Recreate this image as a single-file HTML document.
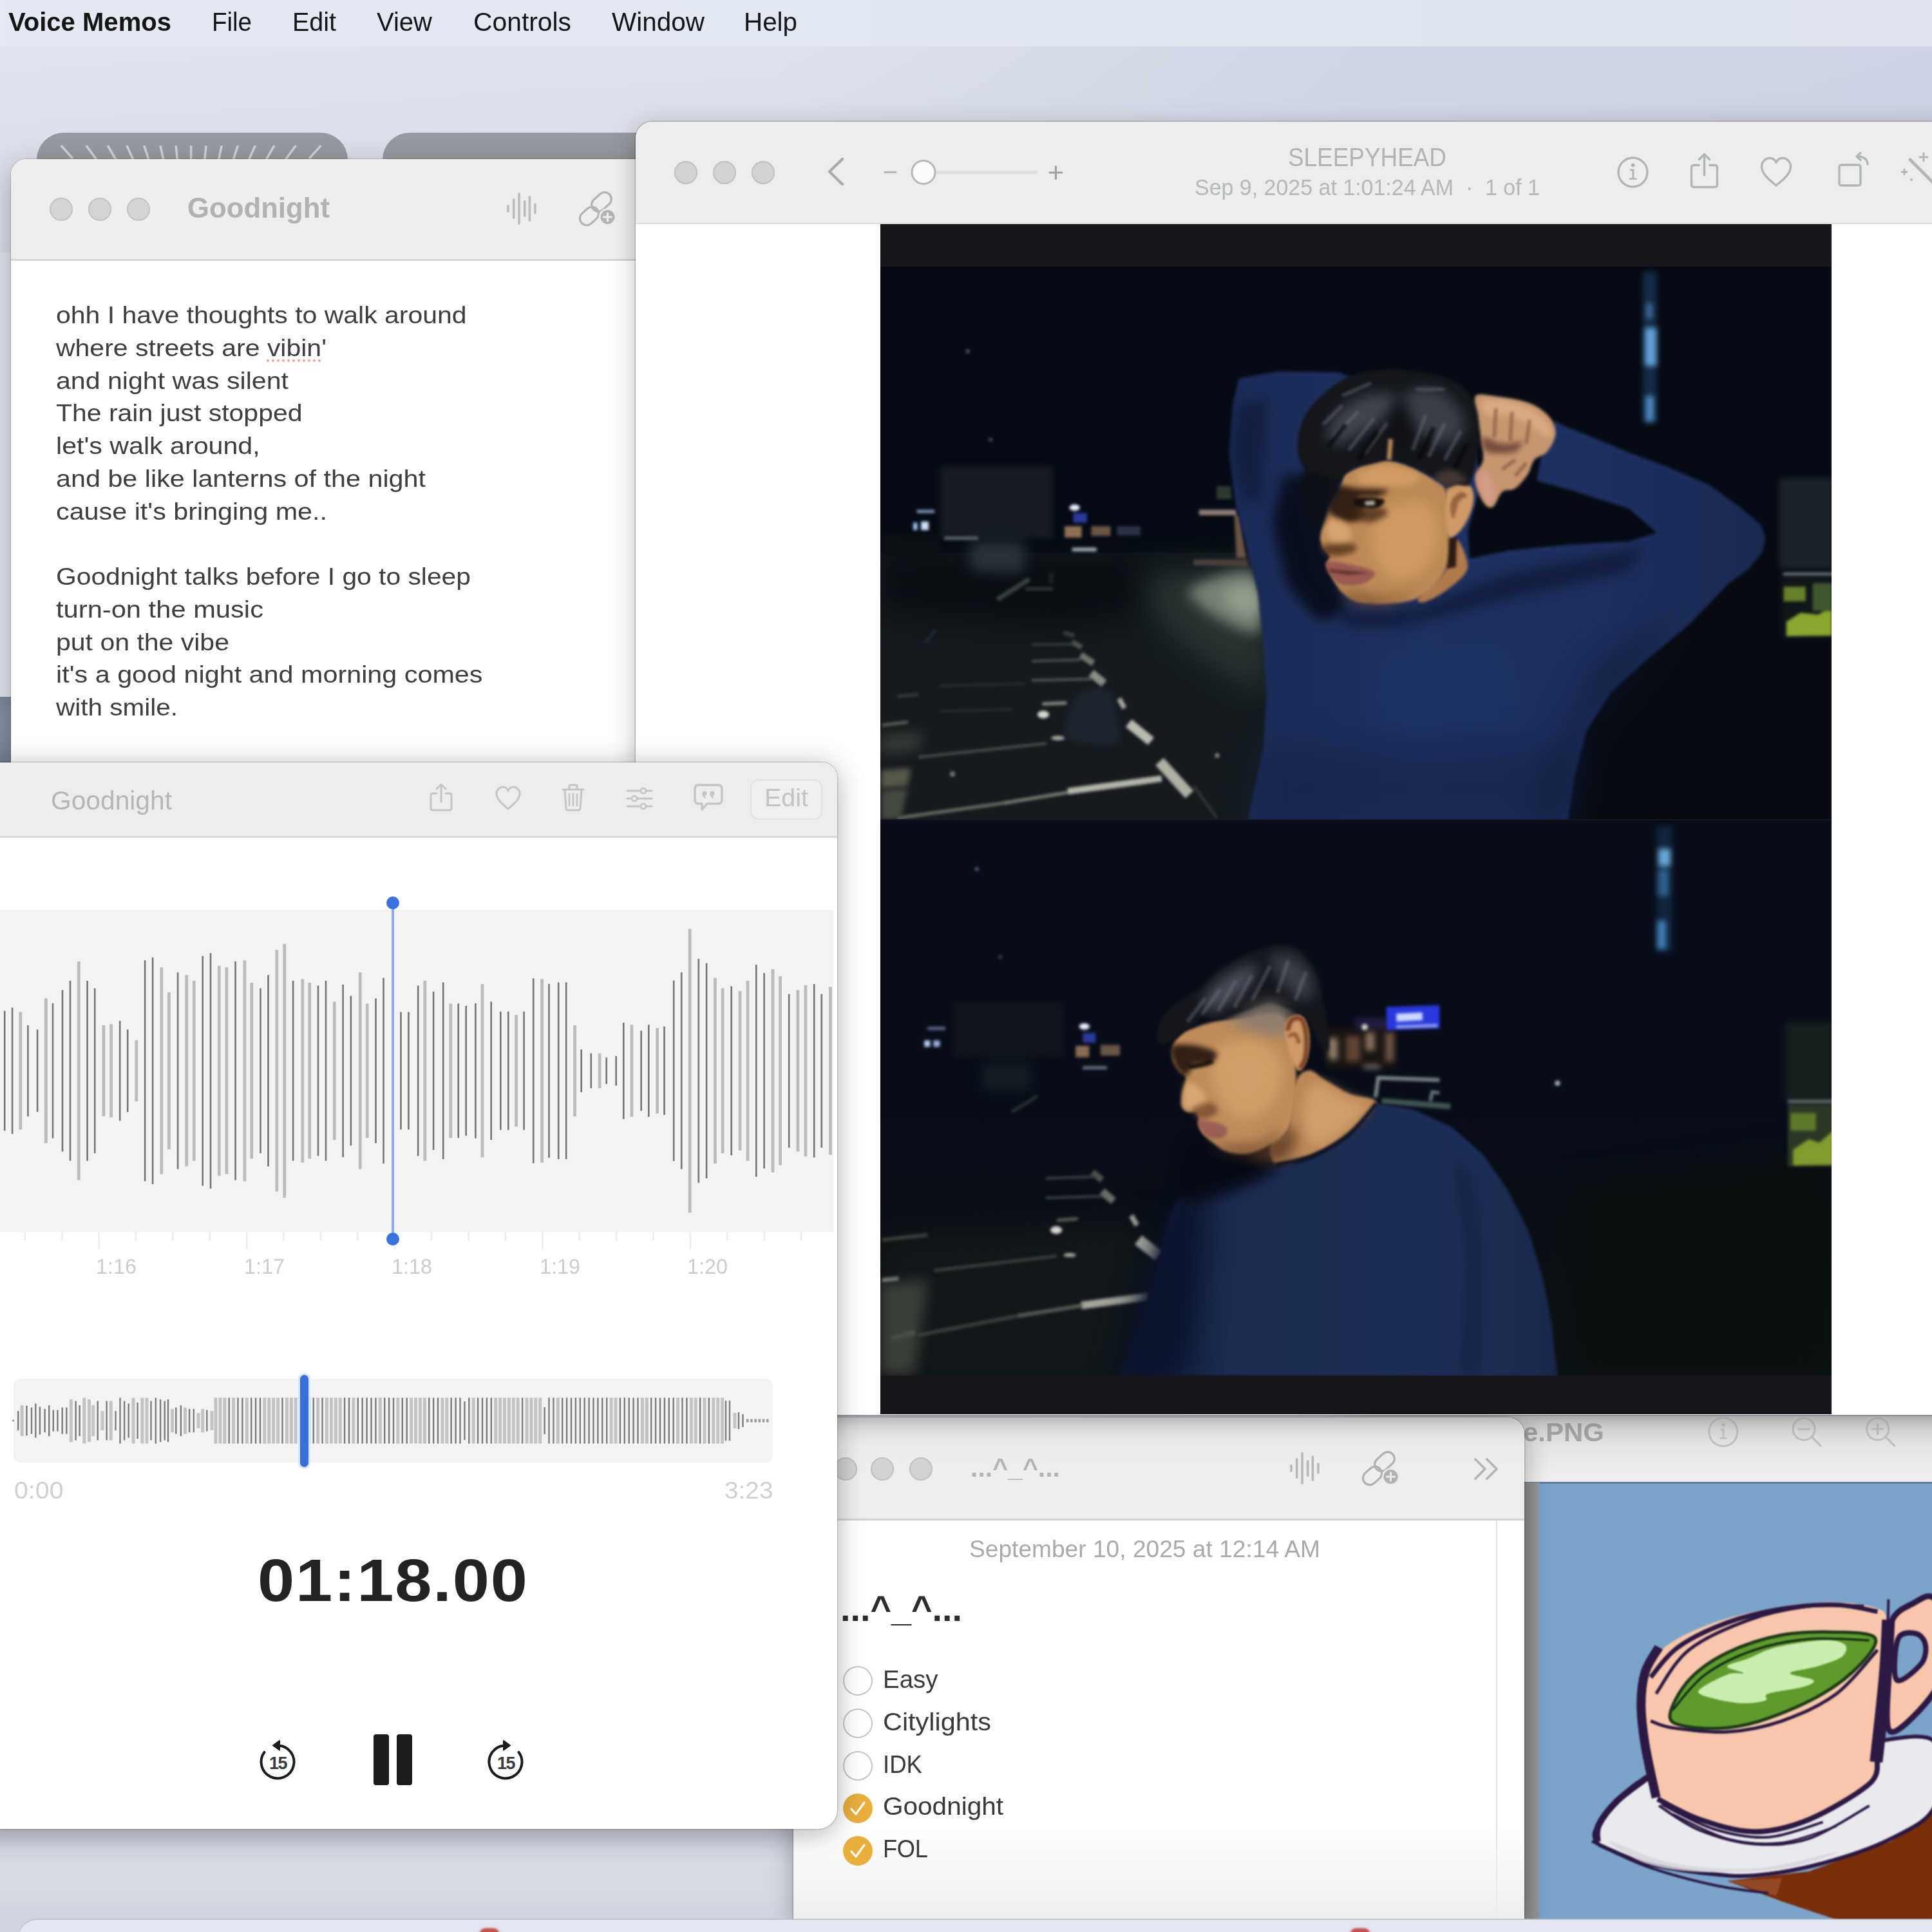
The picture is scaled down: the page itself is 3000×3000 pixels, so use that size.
<!DOCTYPE html><html><head><meta charset="utf-8"><title>Voice Memos</title><style>
html,body{margin:0;padding:0;}
body{width:3000px;height:3000px;overflow:hidden;position:relative;background:#dde2ec;font-family:"Liberation Sans",sans-serif;}
.a{position:absolute;}
.t{position:absolute;white-space:pre;}
svg{position:absolute;overflow:visible;}
</style></head><body>
<!-- sec_desktop -->
<div class="a" style="left:0;top:0;width:3000px;height:3000px;background:linear-gradient(90deg,#dfe4ee 0%,#dde2ec 40%,#d2d7e6 70%,#cdd2e4 100%);"></div>
<div class="a" style="left:0;top:72px;width:3000px;height:320px;background:linear-gradient(180deg,rgba(255,255,255,0.0),rgba(200,205,222,0.35));"></div>
<div class="a" style="left:0;top:0;width:3000px;height:72px;background:linear-gradient(90deg,#e5e9f3,#e1e7f1 60%,#dee3ee);"></div>
<div class="t" style="left:13.0px;top:14.3px;font-size:41.0px;line-height:41.0px;letter-spacing:0.00px;color:#151515;font-weight:700;transform:scaleX(0.9768);transform-origin:0 0;">Voice Memos</div>
<div class="t" style="left:329.0px;top:14.3px;font-size:41.0px;line-height:41.0px;letter-spacing:0.00px;color:#151515;transform:scaleX(0.9384);transform-origin:0 0;">File</div>
<div class="t" style="left:454.0px;top:14.3px;font-size:41.0px;line-height:41.0px;letter-spacing:0.00px;color:#151515;transform:scaleX(0.9625);transform-origin:0 0;">Edit</div>
<div class="t" style="left:585.0px;top:14.3px;font-size:41.0px;line-height:41.0px;letter-spacing:0.00px;color:#151515;transform:scaleX(0.9758);transform-origin:0 0;">View</div>
<div class="t" style="left:735.0px;top:14.3px;font-size:41.0px;line-height:41.0px;letter-spacing:0.00px;color:#151515;transform:scaleX(0.9956);transform-origin:0 0;">Controls</div>
<div class="t" style="left:950.0px;top:14.3px;font-size:41.0px;line-height:41.0px;letter-spacing:0.00px;color:#151515;transform:scaleX(0.9875);transform-origin:0 0;">Window</div>
<div class="t" style="left:1155.0px;top:14.3px;font-size:41.0px;line-height:41.0px;letter-spacing:0.00px;color:#151515;transform:scaleX(0.9843);transform-origin:0 0;">Help</div>
<div class="a" style="left:0;top:1082px;width:40px;height:110px;background:linear-gradient(180deg,#7a879c,#8591a6 30%,#7f8ba0);"></div>
<div class="a" style="left:0;top:2800px;width:1260px;height:200px;background:linear-gradient(180deg,#c8cdd8 0px,#ccd1dc 50px,#d6dbe4 95px,#d6dbe4 140px,#cfd4de 178px,#d1d6e0 200px);"></div>
<div class="a" style="left:57px;top:206px;width:483px;height:200px;border-radius:42px;background:#979ba1;"></div>
<div class="a" style="left:594px;top:206px;width:483px;height:200px;border-radius:42px;background:#979ba1;"></div>
<svg style="left:0;top:0" width="600" height="260" viewBox="0 0 600 260"><g stroke="#ced1d6" stroke-width="3.6" stroke-linecap="butt"><line x1="94.9" y1="226.0" x2="113.0" y2="246.1"/><line x1="133.9" y1="226.0" x2="149.7" y2="247.8"/><line x1="167.3" y1="226.0" x2="180.8" y2="249.4"/><line x1="196.9" y1="226.0" x2="207.9" y2="250.7"/><line x1="223.8" y1="226.0" x2="232.2" y2="251.7"/><line x1="249.0" y1="226.0" x2="254.6" y2="252.4"/><line x1="273.1" y1="226.0" x2="275.9" y2="252.9"/><line x1="296.6" y1="226.0" x2="296.6" y2="253.0"/><line x1="320.1" y1="226.0" x2="317.3" y2="252.9"/><line x1="344.2" y1="226.0" x2="338.6" y2="252.4"/><line x1="369.4" y1="226.0" x2="361.0" y2="251.7"/><line x1="396.3" y1="226.0" x2="385.3" y2="250.7"/><line x1="425.9" y1="226.0" x2="412.4" y2="249.4"/><line x1="459.3" y1="226.0" x2="443.5" y2="247.8"/><line x1="498.3" y1="226.0" x2="480.2" y2="246.1"/></g></svg>
<!-- sec_notes1 -->
<div class="a" style="left:17px;top:247px;width:1100px;height:1000px;border-radius:24px 0 0 0;background:#fff;box-shadow:0 0 0 1px rgba(0,0,0,0.16),0 12px 45px rgba(0,0,0,0.28);overflow:hidden;"><div class="a" style="left:0;top:0;width:1100px;height:155px;background:#eeeeee;border-bottom:3px solid #d6d6d6;"></div></div>
<div class="a" style="left:77.3px;top:307.0px;width:36.0px;height:36.0px;border-radius:50%;background:#d4d4d4;box-shadow:inset 0 0 0 2px #c4c4c4;"></div>
<div class="a" style="left:137.0px;top:307.0px;width:36.0px;height:36.0px;border-radius:50%;background:#d4d4d4;box-shadow:inset 0 0 0 2px #c4c4c4;"></div>
<div class="a" style="left:196.6px;top:307.0px;width:36.0px;height:36.0px;border-radius:50%;background:#d4d4d4;box-shadow:inset 0 0 0 2px #c4c4c4;"></div>
<div class="t" style="left:291.0px;top:301.7px;font-size:43.5px;line-height:43.5px;letter-spacing:0.00px;color:#b2b2b2;font-weight:700;transform:scaleX(1.0053);transform-origin:0 0;">Goodnight</div>
<svg style="left:780.0px;top:294.0px" width="60" height="60" viewBox="-30 -30 60 60"><rect x="-22.8" y="-6.0" width="3.6" height="12.0" rx="1.8" fill="#bdbdbd"/><rect x="-14.1" y="-16.0" width="3.6" height="32.0" rx="1.8" fill="#bdbdbd"/><rect x="-5.7" y="-25.0" width="3.6" height="50.0" rx="1.8" fill="#bdbdbd"/><rect x="2.9" y="-13.0" width="3.6" height="26.0" rx="1.8" fill="#bdbdbd"/><rect x="10.6" y="-20.0" width="3.6" height="40.0" rx="1.8" fill="#bdbdbd"/><rect x="19.1" y="-8.5" width="3.6" height="17.0" rx="1.8" fill="#bdbdbd"/></svg>
<svg style="left:892.0px;top:290.0px" width="70" height="70" viewBox="-35 -35 70 70"><g fill="none" stroke="#b4b4b4" stroke-width="3.3"><rect x="-17" y="-10.5" width="34" height="21" rx="10.5" transform="translate(7,-11.5) rotate(-42)"/><rect x="-16" y="-10.5" width="32" height="21" rx="10.5" transform="translate(-12,10.5) rotate(-42)"/></g><circle cx="16.5" cy="12" r="13.5" fill="#eeeeee"/><circle cx="16.5" cy="12" r="11" fill="#b4b4b4"/><path d="M16.5,6 V18 M10.5,12 H22.5" stroke="#eeeeee" stroke-width="3" stroke-linecap="round"/></svg>
<div class="t" style="left:87.0px;top:471.0px;font-size:37.8px;line-height:37.8px;letter-spacing:0.00px;color:#3e3e3e;transform:scaleX(1.0836);transform-origin:0 0;">ohh I have thoughts to walk around</div>
<div class="t" style="left:87.0px;top:521.8px;font-size:37.8px;line-height:37.8px;letter-spacing:0.00px;color:#3e3e3e;transform:scaleX(1.0839);transform-origin:0 0;">where streets are vibin'</div>
<div class="t" style="left:87.0px;top:572.5px;font-size:37.8px;line-height:37.8px;letter-spacing:0.00px;color:#3e3e3e;transform:scaleX(1.0873);transform-origin:0 0;">and night was silent</div>
<div class="t" style="left:87.0px;top:623.3px;font-size:37.8px;line-height:37.8px;letter-spacing:0.00px;color:#3e3e3e;transform:scaleX(1.0835);transform-origin:0 0;">The rain just stopped</div>
<div class="t" style="left:87.0px;top:674.0px;font-size:37.8px;line-height:37.8px;letter-spacing:0.00px;color:#3e3e3e;transform:scaleX(1.0888);transform-origin:0 0;">let's walk around,</div>
<div class="t" style="left:87.0px;top:724.8px;font-size:37.8px;line-height:37.8px;letter-spacing:0.00px;color:#3e3e3e;transform:scaleX(1.0926);transform-origin:0 0;">and be like lanterns of the night</div>
<div class="t" style="left:87.0px;top:775.5px;font-size:37.8px;line-height:37.8px;letter-spacing:0.00px;color:#3e3e3e;transform:scaleX(1.0923);transform-origin:0 0;">cause it's bringing me..</div>
<div class="t" style="left:87.0px;top:877.0px;font-size:37.8px;line-height:37.8px;letter-spacing:0.00px;color:#3e3e3e;transform:scaleX(1.0791);transform-origin:0 0;">Goodnight talks before I go to sleep</div>
<div class="t" style="left:87.0px;top:927.8px;font-size:37.8px;line-height:37.8px;letter-spacing:0.00px;color:#3e3e3e;transform:scaleX(1.1026);transform-origin:0 0;">turn-on the music</div>
<div class="t" style="left:87.0px;top:978.5px;font-size:37.8px;line-height:37.8px;letter-spacing:0.00px;color:#3e3e3e;transform:scaleX(1.0847);transform-origin:0 0;">put on the vibe</div>
<div class="t" style="left:87.0px;top:1029.3px;font-size:37.8px;line-height:37.8px;letter-spacing:0.00px;color:#3e3e3e;transform:scaleX(1.0931);transform-origin:0 0;">it's a good night and morning comes</div>
<div class="t" style="left:87.0px;top:1080.0px;font-size:37.8px;line-height:37.8px;letter-spacing:0.00px;color:#3e3e3e;transform:scaleX(1.0712);transform-origin:0 0;">with smile.</div>
<div class="a" style="left:414px;top:558px;width:84px;height:0;border-top:4px dotted #eaa3a3;"></div>
<!-- sec_png -->
<div class="a" style="left:2100px;top:2199px;width:1000px;height:782px;background:#7ba4ca;box-shadow:0 10px 40px rgba(0,0,0,0.3);"><div class="a" style="left:0;top:0;width:1000px;height:103px;background:linear-gradient(180deg,#cfcfd1 0px,#d9d9db 12px,#e4e4e6 45px,#ededef 85px,#f0f0f2 103px);"></div><div class="a" style="left:0;top:102px;width:1000px;height:3px;background:#5f7f9f;"></div><div class="a" style="left:267px;top:103px;width:24px;height:680px;background:linear-gradient(90deg,#8a8a8c,#949496 70%,#8b9aac);"></div></div>
<div class="t" style="left:2365.0px;top:2203.7px;font-size:40.5px;line-height:40.5px;letter-spacing:-0.00px;color:#a6a6a8;font-weight:700;transform:scaleX(1.0367);transform-origin:0 0;">e.PNG</div>
<svg style="left:2640px;top:2195px" width="360" height="70" viewBox="2640 2195 360 70"><g fill="none" stroke="#c2c2c4" stroke-width="3.2" stroke-linecap="round">
<circle cx="2675.8" cy="2223.5" r="22"/>
<circle cx="2801" cy="2219" r="17"/><path d="M2813,2231 L2827,2245 M2793,2219 H2809"/>
<circle cx="2915.7" cy="2219" r="17"/><path d="M2927.7,2231 L2941.7,2245 M2907.7,2219 H2923.7 M2915.7,2211 V2227"/>
</g><g fill="#c2c2c4"><circle cx="2676" cy="2212.5" r="2.8"/><path d="M2671.5,2218.5 H2677.5 V2232 H2681.5 V2234.5 H2670.5 V2232 H2674.5 V2221 H2671.5Z"/></g></svg>
<svg style="left:2391px;top:2303px" width="609" height="678" viewBox="2391 2303 609 678"><defs><clipPath id="cpc"><rect x="2391" y="2303" width="609" height="678"/></clipPath><filter id="cb" color-interpolation-filters="sRGB" filterUnits="userSpaceOnUse" x="2300" y="2250" width="800" height="800"><feGaussianBlur stdDeviation="1.3"/></filter></defs><g clip-path="url(#cpc)" filter="url(#cb)"><path d="M2682.0,2920.7 L2809.3,2905.8 L2936.7,2859.1 L3004.6,2812.4 L3004.6,2986.5 L2868.8,2986.5 L2766.9,2952.5Z" fill="#7a2d09"/><path d="M2682.0,2920.7 L2766.9,2916.4 L2758.4,2944.0Z" fill="#a35a3a" opacity="0.6"/><path d="M2480.4,2835.8 C2487.5,2823.7 2505.5,2800.0 2520.7,2787.0 C2535.9,2773.9 2537.7,2766.4 2571.6,2757.2 C2605.6,2748.1 2670.7,2740.3 2724.4,2731.8 C2778.2,2723.3 2847.5,2710.9 2894.2,2706.3 C2940.9,2701.7 2986.2,2687.9 3004.6,2704.2 C3023.0,2720.5 3015.9,2778.8 3004.6,2803.9 C2993.3,2829.1 2965.7,2840.0 2936.7,2854.9 C2907.7,2869.7 2865.9,2883.5 2830.6,2893.1 C2795.2,2902.6 2756.3,2909.7 2724.4,2912.2 C2692.6,2914.6 2667.9,2911.1 2639.6,2907.9 C2611.3,2904.7 2578.0,2899.1 2554.7,2893.1 C2531.3,2887.1 2512.2,2877.5 2499.5,2871.9 C2486.8,2866.2 2481.5,2865.1 2478.3,2859.1 C2475.1,2853.1 2473.3,2847.8 2480.4,2835.8Z" fill="#e9e9ee" stroke="#2b1843" stroke-width="6"/><path d="M2558.9,2759.4 C2551.1,2765.4 2525.0,2783.1 2512.2,2795.4 C2499.5,2807.8 2487.8,2823.0 2482.5,2833.7 C2477.2,2844.3 2480.7,2854.9 2480.4,2859.1" fill="none" stroke="#2b1843" stroke-width="10"/><path d="M2471.9,2859.1 C2485.7,2865.5 2523.2,2886.0 2554.7,2897.3 C2586.1,2908.6 2628.9,2920.0 2660.8,2927.0 C2692.6,2934.1 2731.5,2937.6 2745.7,2939.8" fill="none" stroke="#2b1843" stroke-width="4"/><path d="M2499.5,2859.1 C2506.6,2859.1 2559.6,2886.0 2597.1,2893.1 C2634.6,2900.1 2682.0,2904.4 2724.4,2901.6 C2766.9,2898.7 2844.7,2876.1 2851.8,2876.1 C2858.9,2876.1 2802.3,2896.5 2766.9,2901.6 C2731.5,2906.7 2674.9,2908.1 2639.6,2906.7 C2604.2,2905.2 2578.0,2901.0 2554.7,2893.1 C2531.3,2885.1 2492.4,2859.1 2499.5,2859.1Z" fill="#d5d5dc" opacity="0.8"/><path d="M2575.9,2803.9 C2586.5,2810.3 2614.8,2832.2 2639.6,2842.1 C2664.3,2852.0 2696.2,2861.2 2724.4,2863.4 C2752.7,2865.5 2779.6,2864.8 2809.3,2854.9 C2839.0,2845.0 2887.2,2812.4 2902.7,2803.9" fill="none" stroke="#2b1843" stroke-width="4"/><path d="M2597.1,2816.7 C2611.3,2823.0 2653.7,2847.4 2682.0,2854.9 C2710.3,2862.3 2738.6,2864.4 2766.9,2861.2 C2795.2,2858.1 2837.6,2840.0 2851.8,2835.8" fill="none" stroke="#2b1843" stroke-width="3"/><path d="M2552.5,2608.7 C2556.1,2583.9 2565.6,2575.4 2580.1,2562.0 C2594.6,2548.6 2615.5,2538.0 2639.6,2528.0 C2663.6,2518.1 2692.6,2509.3 2724.4,2502.6 C2756.3,2495.9 2799.4,2488.8 2830.6,2487.7 C2861.7,2486.7 2894.6,2490.9 2911.2,2496.2 C2927.8,2501.5 2927.5,2501.5 2930.3,2519.6 C2933.1,2537.6 2930.7,2572.6 2928.2,2604.4 C2925.7,2636.3 2919.7,2683.0 2915.4,2710.6 C2911.2,2738.1 2916.9,2753.0 2902.7,2770.0 C2888.6,2787.0 2856.7,2800.4 2830.6,2812.4 C2804.4,2824.5 2770.4,2838.6 2745.7,2842.1 C2720.9,2845.7 2710.3,2842.1 2682.0,2833.7 C2653.7,2825.2 2596.4,2811.7 2575.9,2791.2 C2555.4,2770.7 2562.8,2741.0 2558.9,2710.6 C2555.0,2680.1 2549.0,2633.5 2552.5,2608.7Z" fill="#f8c6ab"/><path d="M2936.7,2519.6 C2943.0,2500.5 2959.3,2495.9 2970.6,2489.8 C2981.9,2483.8 2996.1,2471.5 3004.6,2483.5 C3013.1,2495.5 3021.6,2538.3 3021.6,2562.0 C3021.6,2585.7 3018.7,2604.4 3004.6,2625.7 C2990.4,2646.9 2948.7,2692.9 2936.7,2689.3 C2924.6,2685.8 2932.4,2632.7 2932.4,2604.4 C2932.4,2576.2 2930.3,2538.7 2936.7,2519.6Z" fill="#f8c6ab" stroke="#2b1843" stroke-width="9"/><path d="M2947.3,2545.0 C2952.2,2533.0 2967.8,2535.1 2974.9,2536.5 C2981.9,2538.0 2988.3,2545.7 2989.7,2553.5 C2991.1,2561.3 2990.8,2574.0 2983.4,2583.2 C2975.9,2592.4 2951.2,2615.1 2945.2,2608.7 C2939.1,2602.3 2942.3,2557.1 2947.3,2545.0Z" fill="#7ba4ca" stroke="#2b1843" stroke-width="8"/><path d="M2592.9,2663.9 C2593.6,2651.8 2607.7,2625.0 2622.6,2608.7 C2637.4,2592.4 2658.0,2577.9 2682.0,2566.2 C2706.1,2554.6 2738.6,2544.0 2766.9,2538.7 C2795.2,2533.4 2827.7,2533.7 2851.8,2534.4 C2875.8,2535.1 2904.8,2534.8 2911.2,2542.9 C2917.6,2551.0 2903.4,2568.7 2890.0,2583.2 C2876.5,2597.7 2854.6,2615.8 2830.6,2629.9 C2806.5,2644.1 2770.4,2659.3 2745.7,2668.1 C2720.9,2677.0 2703.2,2680.8 2682.0,2683.0 C2660.8,2685.1 2633.2,2684.0 2618.3,2680.8 C2603.5,2677.7 2592.2,2675.9 2592.9,2663.9Z" fill="#5f9a2c" stroke="#1d3a1a" stroke-width="5"/><path d="M2597.1,2655.4 C2605.6,2646.2 2626.8,2615.8 2648.0,2600.2 C2669.3,2584.6 2697.6,2571.2 2724.4,2562.0 C2751.3,2552.8 2779.6,2547.5 2809.3,2545.0 C2839.0,2542.5 2887.2,2546.8 2902.7,2547.1" fill="none" stroke="#16301a" stroke-width="3.5"/><path d="M2637.4,2625.7 C2640.3,2619.3 2670.3,2604.8 2682.0,2600.2 C2693.7,2595.6 2707.5,2600.2 2707.5,2598.1 C2707.5,2596.0 2680.6,2591.4 2682.0,2587.5 C2683.4,2583.6 2703.2,2579.7 2716.0,2574.7 C2728.7,2569.8 2739.3,2562.4 2758.4,2557.8 C2777.5,2553.2 2812.9,2547.9 2830.6,2547.1 C2848.2,2546.4 2859.6,2549.3 2864.5,2553.5 C2869.5,2557.8 2867.3,2567.0 2860.3,2572.6 C2853.2,2578.3 2835.5,2583.2 2822.1,2587.5 C2808.6,2591.7 2780.7,2594.5 2779.6,2598.1 C2778.6,2601.6 2812.2,2605.2 2815.7,2608.7 C2819.2,2612.2 2812.5,2615.8 2800.8,2619.3 C2789.2,2622.8 2755.6,2626.4 2745.7,2629.9 C2735.8,2633.5 2747.8,2638.1 2741.4,2640.5 C2735.1,2643.0 2720.2,2645.1 2707.5,2644.8 C2694.7,2644.4 2676.7,2641.6 2665.0,2638.4 C2653.4,2635.2 2634.6,2632.0 2637.4,2625.7Z" fill="#c9eeb0"/><path d="M2575.9,2557.8 C2572.4,2564.1 2559.3,2581.1 2554.7,2596.0 C2550.1,2610.8 2548.3,2627.8 2548.3,2646.9 C2548.3,2666.0 2550.8,2686.5 2554.7,2710.6 C2558.6,2734.6 2568.8,2777.8 2571.6,2791.2" fill="none" stroke="#2b1843" stroke-width="14"/><path d="M2563.2,2604.4 C2570.2,2596.7 2585.8,2571.9 2605.6,2557.8 C2625.4,2543.6 2655.1,2529.5 2682.0,2519.6 C2708.9,2509.7 2738.6,2502.9 2766.9,2498.3 C2795.2,2493.7 2827.0,2491.3 2851.8,2492.0 C2876.5,2492.7 2904.8,2500.8 2915.4,2502.6" fill="none" stroke="#2b1843" stroke-width="7"/><path d="M2571.6,2629.9 C2580.1,2618.6 2598.5,2581.1 2622.6,2562.0 C2646.6,2542.9 2684.8,2526.6 2716.0,2515.3 C2747.1,2504.0 2779.6,2497.6 2809.3,2494.1 C2839.0,2490.6 2880.1,2494.1 2894.2,2494.1" fill="none" stroke="#2b1843" stroke-width="5"/><path d="M2563.2,2672.4 C2568.8,2674.1 2577.3,2680.1 2597.1,2683.0 C2616.9,2685.8 2653.7,2691.1 2682.0,2689.3 C2710.3,2687.6 2738.6,2682.3 2766.9,2672.4 C2795.2,2662.5 2827.0,2648.3 2851.8,2629.9 C2876.5,2611.5 2904.8,2573.3 2915.4,2562.0" fill="none" stroke="#2b1843" stroke-width="5"/><path d="M2932.4,2515.3 C2931.6,2530.2 2930.5,2567.7 2927.3,2604.4 C2924.2,2641.2 2915.7,2714.1 2913.3,2736.0" fill="none" stroke="#2b1843" stroke-width="20"/><path d="M2932.4,2483.5 L2931.6,2519.6" fill="none" stroke="#2b1843" stroke-width="4"/><path d="M2573.8,2793.3 C2584.7,2798.6 2614.4,2816.7 2639.6,2825.2 C2664.7,2833.7 2696.2,2844.3 2724.4,2844.3 C2752.7,2844.3 2779.6,2837.5 2809.3,2825.2 C2839.0,2812.8 2885.0,2785.5 2902.7,2770.0 C2920.4,2754.4 2913.3,2738.1 2915.4,2731.8" fill="none" stroke="#2b1843" stroke-width="8"/><path d="M2580.1,2801.8 C2593.6,2808.2 2633.2,2831.5 2660.8,2840.0 C2688.4,2848.5 2717.4,2854.5 2745.7,2852.8 C2774.0,2851.0 2816.4,2833.3 2830.6,2829.4" fill="none" stroke="#2b1843" stroke-width="4"/></g></svg>
<!-- sec_notes2 -->
<div class="a" style="left:1232px;top:2201px;width:1135px;height:780px;border-radius:0 26px 0 0;background:#fff;box-shadow:0 0 0 1.5px rgba(0,0,0,0.14),0 10px 40px rgba(0,0,0,0.3);overflow:hidden;"><div class="a" style="left:0;top:0;width:1135px;height:157px;background:linear-gradient(180deg,#dcdcde 0px,#e6e6e8 14px,#ececee 45px,#eeeef0 90px);border-bottom:3px solid #d4d4d6;"></div><div class="a" style="left:1091px;top:160px;width:2px;height:620px;background:#e4e4e6;"></div><div class="a" style="left:0;top:640px;width:1135px;height:140px;background:linear-gradient(180deg,rgba(240,240,242,0),rgba(236,236,238,0.9));"></div></div>
<div class="a" style="left:1295.0px;top:2262.6px;width:36.0px;height:36.0px;border-radius:50%;background:#d2d2d4;box-shadow:inset 0 0 0 2px #c2c2c4;"></div>
<div class="a" style="left:1352.0px;top:2262.6px;width:36.0px;height:36.0px;border-radius:50%;background:#d2d2d4;box-shadow:inset 0 0 0 2px #c2c2c4;"></div>
<div class="a" style="left:1412.0px;top:2262.6px;width:36.0px;height:36.0px;border-radius:50%;background:#d2d2d4;box-shadow:inset 0 0 0 2px #c2c2c4;"></div>
<div class="t" style="left:1507.0px;top:2259.1px;font-size:40.0px;line-height:40.0px;letter-spacing:0.00px;color:#b4b4b6;font-weight:700;transform:scaleX(1.0248);transform-origin:0 0;">...^_^...</div>
<svg style="left:1995.6px;top:2250.0px" width="60" height="60" viewBox="-30 -30 60 60"><rect x="-22.8" y="-6.0" width="3.6" height="12.0" rx="1.8" fill="#b9b9bb"/><rect x="-14.1" y="-16.0" width="3.6" height="32.0" rx="1.8" fill="#b9b9bb"/><rect x="-5.7" y="-25.0" width="3.6" height="50.0" rx="1.8" fill="#b9b9bb"/><rect x="2.9" y="-13.0" width="3.6" height="26.0" rx="1.8" fill="#b9b9bb"/><rect x="10.6" y="-20.0" width="3.6" height="40.0" rx="1.8" fill="#b9b9bb"/><rect x="19.1" y="-8.5" width="3.6" height="17.0" rx="1.8" fill="#b9b9bb"/></svg>
<svg style="left:2108.0px;top:2246.0px" width="70" height="70" viewBox="-35 -35 70 70"><g fill="none" stroke="#b2b2b4" stroke-width="3.3"><rect x="-17" y="-10.5" width="34" height="21" rx="10.5" transform="translate(7,-11.5) rotate(-42)"/><rect x="-16" y="-10.5" width="32" height="21" rx="10.5" transform="translate(-12,10.5) rotate(-42)"/></g><circle cx="16.5" cy="12" r="13.5" fill="#eaeaec"/><circle cx="16.5" cy="12" r="11" fill="#b2b2b4"/><path d="M16.5,6 V18 M10.5,12 H22.5" stroke="#eaeaec" stroke-width="3" stroke-linecap="round"/></svg>
<svg style="left:2285px;top:2255px" width="50" height="50" viewBox="2285 2255 50 50"><g fill="none" stroke="#b6b6b8" stroke-width="3.8" stroke-linecap="round" stroke-linejoin="round"><path d="M2291,2266 L2306,2281 L2291,2296"/><path d="M2309,2266 L2324,2281 L2309,2296"/></g></svg>
<div class="t" style="left:1505.0px;top:2386.7px;font-size:37.0px;line-height:37.0px;letter-spacing:0.00px;color:#aaaaac;transform:scaleX(1.0036);transform-origin:0 0;">September 10, 2025 at 12:14 AM</div>
<div class="t" style="left:1305.0px;top:2469.6px;font-size:56.0px;line-height:56.0px;letter-spacing:0.00px;color:#2c2c2e;font-weight:700;transform:scaleX(0.9953);transform-origin:0 0;">...^_^...</div>
<div class="a" style="left:1308.8px;top:2587.4px;width:46px;height:46px;border-radius:50%;box-sizing:border-box;border:2.5px solid #c6c6c8;background:#fff;"></div>
<div class="t" style="left:1371.0px;top:2588.0px;font-size:39.5px;line-height:39.5px;letter-spacing:0.00px;color:#3a3a3c;transform:scaleX(0.9736);transform-origin:0 0;">Easy</div>
<div class="a" style="left:1308.8px;top:2653.0px;width:46px;height:46px;border-radius:50%;box-sizing:border-box;border:2.5px solid #c6c6c8;background:#fff;"></div>
<div class="t" style="left:1371.0px;top:2653.6px;font-size:39.5px;line-height:39.5px;letter-spacing:0.00px;color:#3a3a3c;transform:scaleX(1.0484);transform-origin:0 0;">Citylights</div>
<div class="a" style="left:1308.8px;top:2719.0px;width:46px;height:46px;border-radius:50%;box-sizing:border-box;border:2.5px solid #c6c6c8;background:#fff;"></div>
<div class="t" style="left:1371.0px;top:2719.6px;font-size:39.5px;line-height:39.5px;letter-spacing:0.00px;color:#3a3a3c;transform:scaleX(0.9264);transform-origin:0 0;">IDK</div>
<div class="a" style="left:1308.8px;top:2784.5px;width:46px;height:46px;border-radius:50%;background:#e9ae3c;"></div>
<svg style="left:1308.8px;top:2784.5px" width="46" height="46" viewBox="-23 -23 46 46"><path d="M-10,1 L-3,9 L10,-9" fill="none" stroke="#fff" stroke-width="3.2" stroke-linecap="round" stroke-linejoin="round"/></svg>
<div class="t" style="left:1371.0px;top:2785.1px;font-size:39.5px;line-height:39.5px;letter-spacing:0.00px;color:#3a3a3c;transform:scaleX(1.0259);transform-origin:0 0;">Goodnight</div>
<div class="a" style="left:1308.8px;top:2850.8px;width:46px;height:46px;border-radius:50%;background:#e9ae3c;"></div>
<svg style="left:1308.8px;top:2850.8px" width="46" height="46" viewBox="-23 -23 46 46"><path d="M-10,1 L-3,9 L10,-9" fill="none" stroke="#fff" stroke-width="3.2" stroke-linecap="round" stroke-linejoin="round"/></svg>
<div class="t" style="left:1371.0px;top:2851.4px;font-size:39.5px;line-height:39.5px;letter-spacing:-0.37px;color:#3a3a3c;transform:scaleX(0.9200);transform-origin:0 0;">FOL</div>
<!-- sec_preview -->
<div class="a" style="left:987px;top:189px;width:2100px;height:2008px;border-radius:26px 0 0 0;background:#fff;box-shadow:0 0 0 1.5px rgba(0,0,0,0.16),0 8px 38px rgba(0,0,0,0.26);overflow:hidden;"><div class="a" style="left:0;top:0;width:2100px;height:157px;background:#ebedee;border-bottom:2px solid #dcdedf;"></div></div>
<div class="a" style="left:1047.4px;top:250.0px;width:36.0px;height:36.0px;border-radius:50%;background:#d0d2d3;box-shadow:inset 0 0 0 2px #c0c2c3;"></div>
<div class="a" style="left:1107.4px;top:250.0px;width:36.0px;height:36.0px;border-radius:50%;background:#d0d2d3;box-shadow:inset 0 0 0 2px #c0c2c3;"></div>
<div class="a" style="left:1167.0px;top:250.0px;width:36.0px;height:36.0px;border-radius:50%;background:#d0d2d3;box-shadow:inset 0 0 0 2px #c0c2c3;"></div>
<svg style="left:1270px;top:230px" width="400" height="80" viewBox="1270 230 400 80"><g fill="none" stroke-linecap="round" stroke-linejoin="round">
<path d="M1308,247 L1288,266.5 L1308,286" stroke="#a9abac" stroke-width="4.5"/>
<path d="M1374,267.5 H1391" stroke="#b4b6b7" stroke-width="3"/>
<path d="M1434,267.5 H1609" stroke="#dcdedf" stroke-width="5"/>
<circle cx="1434" cy="267.5" r="18" fill="#fbfbfb" stroke="#b6b8b9" stroke-width="3"/>
<path d="M1630,268 H1649 M1639.5,258.5 V277.5" stroke="#9fa1a2" stroke-width="3.2"/>
</g></svg>
<div class="t" style="left:2000.0px;top:224.1px;font-size:40.0px;line-height:40.0px;letter-spacing:0.00px;color:#b1b3b4;transform:scaleX(0.9221);transform-origin:0 0;">SLEEPYHEAD</div>
<div class="t" style="left:1855.0px;top:273.8px;font-size:34.5px;line-height:34.5px;letter-spacing:0.00px;color:#b6b8b9;transform:scaleX(0.9840);transform-origin:0 0;">Sep 9, 2025 at 1:01:24 AM  ·  1 of 1</div>
<svg style="left:2500px;top:225px" width="500" height="90" viewBox="2500 225 500 90"><g fill="none" stroke="#b3b5b6" stroke-width="3.4" stroke-linecap="round" stroke-linejoin="round">
<circle cx="2535.5" cy="267.5" r="22.5"/>

<path d="M2638,256.5 H2630.5 Q2626.5,256.5 2626.5,260.5 V286.5 Q2626.5,290.5 2630.5,290.5 H2662.5 Q2666.5,290.5 2666.5,286.5 V260.5 Q2666.5,256.5 2662.5,256.5 H2655"/>
<path d="M2646.5,272 V240 M2638.5,247.5 L2646.5,239.5 L2654.5,247.5"/>
<path d="M2758,288 C2744,277 2735.5,268.5 2735.5,258.5 C2735.5,251 2741.5,245.5 2748,245.5 C2753,245.5 2756.5,248.5 2758,252.5 C2759.5,248.5 2763,245.5 2768,245.5 C2774.500,245.5 2780.500,251 2780.500,258.5 C2780.500,268.500 2772,277 2758,288Z"/>
<rect x="2856" y="256" width="33" height="32" rx="3"/>
<path d="M2884,243 Q2899,243 2900,255"/>
<path d="M2889,237.5 L2883,243 L2889,248.5"/>
<path d="M2966,248 L3005,287" stroke-width="5"/>
<path d="M2987,238 V250 M2981,244 H2993 M2957,263 V271 M2953,267 H2961" stroke-width="2.8"/>
</g><g fill="#b3b5b6"><circle cx="2535.7" cy="256.5" r="2.9"/><path d="M2531,262.5 H2537.5 V276.500 H2541.500 V279 H2530 V276.500 H2534.300 V265 H2531Z"/><circle cx="2968" cy="279" r="2"/></g>
</svg>
<svg class="a" style="left:1367px;top:348px;" width="1477" height="1848" viewBox="1367 348 1477 1848">
<defs>
<filter id="b2" color-interpolation-filters="sRGB" filterUnits="userSpaceOnUse" x="1200" y="200" width="1800" height="2100"><feGaussianBlur stdDeviation="2"/></filter>
<filter id="b4" color-interpolation-filters="sRGB" filterUnits="userSpaceOnUse" x="1200" y="200" width="1800" height="2100"><feGaussianBlur stdDeviation="4"/></filter>
<filter id="b10" color-interpolation-filters="sRGB" filterUnits="userSpaceOnUse" x="1200" y="200" width="1800" height="2100"><feGaussianBlur stdDeviation="10"/></filter>
<filter id="b25" color-interpolation-filters="sRGB" filterUnits="userSpaceOnUse" x="1200" y="200" width="1800" height="2100"><feGaussianBlur stdDeviation="25"/></filter>
<clipPath id="cp1"><rect x="1367" y="414" width="1477" height="858"/></clipPath>
<clipPath id="cp2"><rect x="1367" y="1274" width="1477" height="862"/></clipPath>
<linearGradient id="sw1" x1="0" y1="0" x2="1" y2="0"><stop offset="0" stop-color="#1a2a55"/><stop offset="0.35" stop-color="#1f3263"/><stop offset="0.7" stop-color="#1e3060"/><stop offset="1" stop-color="#192850"/></linearGradient>
<linearGradient id="sw2" x1="0" y1="0" x2="1" y2="0"><stop offset="0" stop-color="#101a36"/><stop offset="0.25" stop-color="#1a2a50"/><stop offset="0.8" stop-color="#1c2d56"/><stop offset="1" stop-color="#182649"/></linearGradient>
<linearGradient id="face1" x1="0" y1="0" x2="1" y2="0"><stop offset="0" stop-color="#6b3f25"/><stop offset="0.3" stop-color="#b57d4e"/><stop offset="0.6" stop-color="#d39b68"/><stop offset="1" stop-color="#a8703f"/></linearGradient>
<linearGradient id="face2" x1="0" y1="0" x2="1" y2="0"><stop offset="0" stop-color="#b88355"/><stop offset="0.4" stop-color="#cf9a6a"/><stop offset="1" stop-color="#b07a4c"/></linearGradient>
<radialGradient id="road1" cx="0.9" cy="0.35" r="0.8"><stop offset="0" stop-color="#8b978a"/><stop offset="0.35" stop-color="#4a554e"/><stop offset="0.8" stop-color="#151c1d" stop-opacity="0"/></radialGradient>
</defs>
<rect x="1367" y="348" width="1477" height="1848" fill="#16171c"/>
<g clip-path="url(#cp1)">
<rect x="1367" y="414" width="1477" height="858" fill="#060b15"/>
<rect x="1367" y="858" width="1477" height="420" fill="#080c12"/>
<rect x="1367" y="858" width="640" height="420" fill="#141a1e"/>
<path d="M1360.0,856.2 L1923.1,856.2 L1923.1,919.1 L1658.1,978.7 L1360.0,952.2Z" fill="#0a0f14" filter="url(#b25)"/>
<path d="M1774.0,889.3 L1952.9,879.4 L1966.2,1078.1 L1856.9,1011.9 L1790.6,952.2Z" fill="#2f3a36" opacity="0.85" filter="url(#b25)"/>
<path d="M1850.2,912.5 C1864.0,904.2 1928.6,878.3 1946.3,889.3 C1964.0,900.3 1963.4,966.0 1956.2,978.7 C1949.0,991.4 1918.7,972.1 1903.2,965.5 C1887.8,958.9 1872.3,947.8 1863.5,939.0 C1854.6,930.2 1836.4,920.8 1850.2,912.5Z" fill="#7f8b7c" opacity="0.9" filter="url(#b10)"/>
<path d="M1903.2,919.1 C1908.7,913.6 1941.3,907.0 1949.6,912.5 C1957.9,918.0 1958.4,946.7 1952.9,952.2 C1947.4,957.8 1924.8,951.1 1916.5,945.6 C1908.2,940.1 1897.7,924.6 1903.2,919.1Z" fill="#a9b5a0" opacity="0.6" filter="url(#b10)"/>
<path d="M1459.4,723.7 L1634.9,723.7 L1634.9,836.3 L1459.4,836.3Z" fill="#151b20" filter="url(#b4)"/>
<path d="M1505.7,841.3 L1591.9,841.3 L1588.6,889.3 L1509.1,886.0Z" fill="#2c373d" filter="url(#b10)" opacity="0.9"/>
<path d="M1368.3,829.7 L1459.4,829.7 L1459.4,862.8 L1368.3,862.8Z" fill="#0c1116" filter="url(#b4)"/>
<g filter="url(#b2)">
<path d="M1418.0,811.5 L1424.6,811.5 L1424.6,823.1 L1418.0,823.1Z" fill="#9fc0f0"/>
<path d="M1430.2,809.8 L1442.1,809.8 L1442.1,823.1 L1430.2,823.1Z" fill="#cfe0ff"/>
<path d="M1423.6,791.6 L1451.1,791.6 L1451.1,796.6 L1423.6,796.6Z" fill="#7f93b8"/>
<ellipse cx="1668.7" cy="788.3" rx="8" ry="5" fill="#e8f0ff"/>
<path d="M1666.4,796.6 L1687.9,796.6 L1687.9,811.5 L1666.4,811.5Z" fill="#2a3a9a"/>
<path d="M1653.1,817.1 L1679.6,817.1 L1679.6,834.7 L1653.1,834.7Z" fill="#8f7052"/>
<path d="M1694.5,817.1 L1724.4,817.1 L1724.4,832.3 L1694.5,832.3Z" fill="#6a5645"/>
<path d="M1734.3,817.1 L1770.7,817.1 L1770.7,831.3 L1734.3,831.3Z" fill="#2c3044"/>
<path d="M1664.7,850.2 L1702.8,850.2 L1702.8,856.2 L1664.7,856.2Z" fill="#9aa6b4"/>
<path d="M1861.8,791.6 L1919.8,791.6 L1919.8,799.9 L1861.8,799.9Z" fill="#8f8078"/>
<path d="M1916.5,799.9 L1924.8,799.9 L1934.7,866.1 L1919.8,866.1Z" fill="#6a5446"/>
<path d="M1853.5,868.8 L1936.3,868.8 L1938.0,879.4 L1853.5,878.0Z" fill="#4a403a"/>
<path d="M1466.0,833.0 L1519.0,833.0 L1519.0,838.3 L1466.0,838.3Z" fill="#5a626c"/>
<circle cx="1502.6" cy="545.6" r="3" fill="#55607a"/>
<circle cx="1538" cy="682.8" r="3" fill="#454f66"/>
<path d="M1889,755 L1911,755 L1913,775 L1889,775Z" fill="#2c3a30"/>
</g>
<g filter="url(#b2)">
<path d="M1658.1,1228.8 L1803.9,1208.9" stroke="#b4b6aa" stroke-width="10.0" fill="none" stroke-linecap="butt" opacity="1.00"/>
<path d="M1800.5,1182.5 L1846.9,1233.8" stroke="#aeb0a4" stroke-width="17.0" fill="none" stroke-linecap="butt" opacity="1.00"/>
<path d="M1752.5,1122.8 L1787.3,1151.0" stroke="#babcb0" stroke-width="15.0" fill="none" stroke-linecap="butt" opacity="1.00"/>
<path d="M1737.6,1084.7 L1745.9,1099.6" stroke="#a4a69c" stroke-width="8.0" fill="none" stroke-linecap="butt" opacity="1.00"/>
<path d="M1694.5,1045.0 L1714.4,1061.6" stroke="#8a8e84" stroke-width="13.0" fill="none" stroke-linecap="butt" opacity="1.00"/>
<path d="M1678.0,1016.8 L1697.9,1030.1" stroke="#6f746c" stroke-width="10.0" fill="none" stroke-linecap="butt" opacity="1.00"/>
<path d="M1664.7,997.0 L1679.6,1005.2" stroke="#50564f" stroke-width="8.0" fill="none" stroke-linecap="butt" opacity="1.00"/>
<path d="M1651.5,982.1 L1668.0,987.0" stroke="#3a403c" stroke-width="6.0" fill="none" stroke-linecap="butt" opacity="1.00"/>
<path d="M1601.8,1056.6 L1694.5,1054.3" stroke="#5a605a" stroke-width="3.5" fill="none" stroke-linecap="butt" opacity="1.00"/>
<path d="M1601.8,1026.8 L1678.0,1024.5" stroke="#525852" stroke-width="3.5" fill="none" stroke-linecap="butt" opacity="1.00"/>
<path d="M1601.8,1001.3 L1664.7,1000.3" stroke="#3f4540" stroke-width="3.0" fill="none" stroke-linecap="butt" opacity="1.00"/>
<path d="M1618.4,1093.0 L1656.5,1091.4" stroke="#8a8e86" stroke-width="5.0" fill="none" stroke-linecap="butt" opacity="1.00"/>
<path d="M1426.2,1175.8 L1625.0,1154.3" stroke="#4d534d" stroke-width="4.0" fill="none" stroke-linecap="butt" opacity="1.00"/>
<path d="M1369.9,1126.1 L1409.7,1121.2" stroke="#5a5f58" stroke-width="5.0" fill="none" stroke-linecap="butt" opacity="1.00"/>
<path d="M1393.1,1270.2 L1558.7,1247.0" stroke="#6a6f66" stroke-width="5.0" fill="none" stroke-linecap="butt" opacity="1.00"/>
<path d="M1558.7,1247.0 L1658.1,1230.5" stroke="#7a7f76" stroke-width="5.0" fill="none" stroke-linecap="butt" opacity="1.00"/>
<path d="M1853.5,1220.5 L1890.0,1270.2" stroke="#3a4040" stroke-width="3.0" fill="none" stroke-linecap="butt" opacity="1.00"/>
<path d="M1548.8,930.7 L1598.5,899.2" stroke="#3a4242" stroke-width="7.0" fill="none" stroke-linecap="butt" opacity="1.00"/>
<path d="M1591.9,914.2 L1634.9,914.2" stroke="#2c3436" stroke-width="5.0" fill="none" stroke-linecap="butt" opacity="1.00"/>
<path d="M1436.2,998.6 L1452.7,978.7" stroke="#242c30" stroke-width="4.0" fill="none" stroke-linecap="butt" opacity="1.00"/>
<path d="M1459.4,1064.9 L1591.9,1061.6" stroke="#2a3032" stroke-width="3.0" fill="none" stroke-linecap="butt" opacity="1.00"/>
<path d="M1459.4,1104.6 L1572.0,1101.3" stroke="#2a3032" stroke-width="3.0" fill="none" stroke-linecap="butt" opacity="1.00"/>
<path d="M1393.1,1081.4 L1426.2,1078.1" stroke="#3a403c" stroke-width="4.0" fill="none" stroke-linecap="butt" opacity="1.00"/>
<ellipse cx="1620" cy="1109.6" rx="9" ry="6" fill="#d8dad0"/>
<ellipse cx="1643" cy="1146" rx="11" ry="3.5" fill="#a8aaa0"/>
<circle cx="1479" cy="1202" r="4" fill="#7a7c74"/>
<circle cx="1890" cy="1173" r="3.5" fill="#8a8c84"/>
<path d="M1628.3,889.3 L1636.6,889.3 L1636.6,905.9 L1628.3,905.9Z" fill="#1a2024"/>
</g>
<path d="M1368.3,1195.7 L1414.7,1192.4 L1409.7,1220.5 L1368.3,1223.9Z" fill="#5a5c4c" filter="url(#b4)" opacity="0.95"/>
<path d="M1368.3,1227.2 L1409.7,1223.9 L1399.7,1270.2 L1368.3,1273.5Z" fill="#4a4e42" filter="url(#b4)" opacity="0.9"/>
<path d="M1368.3,1141.0 L1432.9,1137.7 L1426.2,1164.2 L1368.3,1170.9Z" fill="#3a4038" filter="url(#b10)" opacity="0.9"/>
<path d="M1659.8,1104.6 C1663.1,1092.5 1667.8,1080.3 1678.0,1074.8 C1688.2,1069.3 1711.7,1065.4 1721.0,1071.5 C1730.4,1077.6 1732.1,1097.4 1734.3,1111.2 C1736.5,1125.0 1747.0,1148.2 1734.3,1154.3 C1721.6,1160.4 1670.5,1156.0 1658.1,1147.7 C1645.7,1139.4 1656.5,1116.8 1659.8,1104.6Z" fill="#1d232c" filter="url(#b4)"/>
<g filter="url(#b4)">
<path d="M2551.1,421.7 L2572.8,421.7 L2572.8,655.4 L2551.1,655.4Z" fill="#142a44"/>
<path d="M2553.8,508.7 L2572.8,508.7 L2572.8,568.5 L2553.8,568.5Z" fill="#5f9fd4"/>
<path d="M2554.9,614.7 L2568.5,614.7 L2568.5,655.4 L2554.9,655.4Z" fill="#4a88bf"/>
<path d="M2555.4,470.7 L2566.3,470.7 L2566.3,495.1 L2555.4,495.1Z" fill="#3a6a9a"/>
</g>
<path d="M2763.0,742.4 L2847.3,742.4 L2847.3,883.7 L2763.0,883.7Z" fill="#1b2328" filter="url(#b4)"/>
<path d="M2765.8,889.1 L2847.3,889.1 L2847.3,989.7 L2765.8,989.7Z" fill="#10161a" filter="url(#b4)"/>
<g filter="url(#b2)">
<path d="M2769.6,910.9 L2803.8,910.9 L2803.8,933.7 L2769.6,933.7Z" fill="#66802a"/>
<path d="M2773.9,965.2 L2795.7,951.6 L2822.8,954.3 L2844.6,943.5 L2844.6,987.0 L2773.9,988.0Z" fill="#8aa62e"/>
<path d="M2814.7,905.4 L2844.6,905.4 L2844.6,948.9 L2814.7,948.9Z" fill="#3f5630"/>
<path d="M2768.5,889.1 L2847.3,889.1 L2847.3,893.5 L2768.5,893.5Z" fill="#66707a"/>
</g>
<path d="M1923.4,587.5 L1985.9,576.6 L2078.3,578.3 L2176.1,617.4 L2284.8,682.6 L2301.1,747.8 L2279.3,823.9 L2282.1,867.4 L2342.9,854.9 L2436.4,845.7 L2529.3,840.8 L2572.8,827.2 L2529.3,789.7 L2442.4,762.0 L2386.4,746.2 L2393.5,704.3 L2415.2,652.7 L2423.9,659.2 L2475.0,679.9 L2529.3,702.7 L2591.8,726.1 L2653.8,752.7 L2703.3,788.6 L2734.2,814.7 L2741.3,834.8 L2737.0,856.5 L2715.8,883.2 L2684.8,905.4 L2621.7,970.7 L2556.5,1025.0 L2502.2,1073.9 L2464.1,1133.7 L2445.1,1204.3 L2434.2,1275.0 L1937.0,1275.0 L1947.8,1226.1 L1961.4,1160.9 L1966.8,1079.3 L1961.4,997.8 L1953.3,921.7 L1937.0,856.5 L1917.9,780.4 L1908.7,704.3 L1914.1,628.3Z" fill="url(#sw1)" filter="url(#b2)"/>
<path d="M2002.2,747.8 L2034.8,889.1 L2078.3,943.5 L2056.5,965.2 L2013.0,921.7 L1980.4,813.0Z" fill="#0e1836" opacity="0.75" filter="url(#b10)"/>
<path d="M2083.7,948.9 L2197.8,943.5 L2339.1,889.1 L2447.8,867.4 L2556.5,845.7 L2529.3,889.1 L2339.1,932.6 L2176.1,976.1 L2089.1,976.1Z" fill="#0d1633" opacity="0.7" filter="url(#b10)"/>
<path d="M2475.0,1025.0 L2610.9,943.5 L2556.5,1025.0 L2464.1,1133.7 L2437.0,1269.6 L2366.3,1269.6Z" fill="#0c1530" opacity="0.6" filter="url(#b25)"/>
<path d="M2121.7,1025.0 L2339.1,997.8 L2366.3,1160.9 L2121.7,1188.0Z" fill="#223a78" opacity="0.22" filter="url(#b25)"/>
<path d="M1958.7,1150.0 L2447.8,1150.0 L2437.0,1296.7 L1937.0,1296.7Z" fill="#131f42" opacity="0.5" filter="url(#b25)"/>
<path d="M1920.7,628.3 L1969.6,617.4 L1958.7,780.4 L1931.5,780.4 L1912.5,704.3Z" fill="#0c1530" opacity="0.55" filter="url(#b10)"/>
<path d="M1994,735 L2050,740 L2072,860 L2092,950 L2046,962 L1998,905 L1978,810Z" fill="#090e1c" opacity="0.92" filter="url(#b10)"/>
<path d="M2203.6,927.6 C2209.0,919.7 2233.8,902.7 2243.4,887.8 C2252.9,872.9 2254.9,841.0 2260.7,838.1 C2266.5,835.2 2276.1,861.3 2278.1,870.4 C2280.2,879.5 2279.4,884.5 2273.2,892.8 C2267.0,901.1 2251.2,913.1 2240.9,920.1 C2230.5,927.2 2217.3,933.8 2211.1,935.0 C2204.8,936.3 2198.2,935.4 2203.6,927.6Z" fill="#b07a4c" filter="url(#b2)"/>
<path d="M2243.4,835.7 L2262.0,833.2 L2260.7,880.4 L2245.8,882.9Z" fill="#2a1a12" filter="url(#b2)"/>
<path d="M2086.8,738.8 C2083.9,743.3 2083.5,750.4 2079.4,758.6 C2075.2,766.9 2066.1,779.3 2062.0,788.4 C2057.8,797.6 2056.5,805.4 2054.5,813.3 C2052.5,821.2 2050.1,829.4 2050.1,835.7 C2050.1,841.9 2052.1,846.0 2054.5,850.6 C2056.9,855.1 2063.4,858.8 2064.5,863.0 C2065.5,867.1 2060.3,870.4 2060.7,875.4 C2061.2,880.4 2064.7,887.4 2067.0,892.8 C2069.2,898.2 2071.1,902.7 2074.4,907.7 C2077.7,912.7 2081.0,918.1 2086.8,922.6 C2092.6,927.2 2098.0,932.5 2109.2,935.0 C2120.4,937.5 2139.0,938.3 2153.9,937.5 C2168.8,936.7 2186.2,935.0 2198.6,930.1 C2211.1,925.1 2220.6,916.0 2228.4,907.7 C2236.3,899.4 2242.3,892.0 2245.8,880.4 C2249.4,868.8 2249.2,853.5 2249.6,838.1 C2250.0,822.8 2249.4,801.7 2248.3,788.4 C2247.3,775.2 2246.7,765.7 2243.4,758.6 C2240.0,751.6 2237.1,751.8 2228.4,746.2 C2219.8,740.6 2203.6,730.5 2191.2,725.1 C2178.8,719.7 2165.9,714.5 2153.9,713.9 C2141.9,713.3 2128.7,718.5 2119.1,721.4 C2109.6,724.3 2102.2,728.4 2096.8,731.3 C2091.4,734.2 2089.7,734.2 2086.8,738.8Z" fill="#bd8a56" filter="url(#b2)"/>
<path d="M2139.0,803.4 C2150.6,789.3 2187.9,776.9 2203.6,778.5 C2219.3,780.2 2230.9,797.1 2233.4,813.3 C2235.9,829.4 2229.3,860.9 2218.5,875.4 C2207.7,889.9 2182.9,902.3 2168.8,900.2 C2154.7,898.2 2139.0,879.1 2134.0,863.0 C2129.1,846.8 2127.4,817.4 2139.0,803.4Z" fill="#d49e66" opacity="0.8" filter="url(#b10)"/>
<path d="M2109.2,736.3 C2115.0,731.3 2138.2,721.0 2153.9,721.4 C2169.6,721.8 2198.6,733.4 2203.6,738.8 C2208.6,744.1 2197.8,751.6 2183.7,753.7 C2169.6,755.7 2131.6,754.1 2119.1,751.2 C2106.7,748.3 2103.4,741.2 2109.2,736.3Z" fill="#d9a46a" opacity="0.7" filter="url(#b4)"/>
<path d="M2079.4,756.1 C2087.2,751.2 2096.8,757.8 2109.2,758.6 C2121.6,759.5 2148.9,759.0 2153.9,761.1 C2158.9,763.2 2146.5,769.0 2139.0,771.1 C2131.6,773.1 2112.5,769.0 2109.2,773.5 C2105.9,778.1 2120.8,792.2 2119.1,798.4 C2117.5,804.6 2106.7,810.0 2099.3,810.8 C2091.8,811.6 2080.6,807.1 2074.4,803.4 C2068.2,799.6 2061.2,796.3 2062.0,788.4 C2062.8,780.6 2071.5,761.1 2079.4,756.1Z" fill="#2c1b12" opacity="0.95" filter="url(#b4)"/>
<path d="M2104.2,790.9 C2110.0,788.0 2135.7,787.2 2144.0,788.4 C2152.3,789.7 2156.4,794.7 2153.9,798.4 C2151.4,802.1 2136.5,809.6 2129.1,810.8 C2121.6,812.0 2113.3,809.2 2109.2,805.8 C2105.1,802.5 2098.4,793.8 2104.2,790.9Z" fill="#4a2c1a" opacity="0.8" filter="url(#b4)"/>
<path d="M2101.7,776.0 C2103.4,773.5 2111.3,772.3 2119.1,772.3 C2127.0,772.3 2145.6,773.3 2148.9,776.0 C2152.3,778.7 2145.6,786.6 2139.0,788.4 C2132.4,790.3 2115.4,789.3 2109.2,787.2 C2103.0,785.1 2100.1,778.5 2101.7,776.0Z" fill="#1a100b" filter="url(#b2)"/>
<path d="M2119.1,778.5 L2134.0,777.3 L2135.3,784.0 L2120.4,784.7Z" fill="#b8b4a8" filter="url(#b2)"/>
<path d="M2054.5,846.8 C2061.2,844.1 2091.0,842.9 2099.3,844.3 C2107.5,845.8 2107.5,852.4 2104.2,855.5 C2100.9,858.6 2086.8,862.2 2079.4,863.0 C2071.9,863.8 2063.6,863.2 2059.5,860.5 C2055.4,857.8 2047.9,849.5 2054.5,846.8Z" fill="#5a3520" opacity="0.85" filter="url(#b4)"/>
<path d="M2062.0,808.3 C2066.1,804.2 2083.5,808.3 2089.3,813.3 C2095.1,818.3 2100.9,834.0 2096.8,838.1 C2092.6,842.3 2070.3,843.1 2064.5,838.1 C2058.7,833.2 2057.8,812.5 2062.0,808.3Z" fill="#e0ae7a" opacity="0.7" filter="url(#b4)"/>
<path d="M2059.5,872.9 C2063.6,869.6 2079.4,872.9 2091.8,875.4 C2104.2,877.9 2129.5,882.9 2134.0,887.8 C2138.6,892.8 2127.4,901.9 2119.1,905.2 C2110.8,908.5 2093.0,909.4 2084.3,907.7 C2075.7,906.0 2071.1,901.1 2067.0,895.3 C2062.8,889.5 2055.4,876.2 2059.5,872.9Z" fill="#9a5a52" filter="url(#b2)"/>
<path d="M2062.0,884.1 L2094.3,886.6 L2129.1,890.3 L2094.3,892.3 L2064.5,888.3Z" fill="#5a3028" filter="url(#b2)"/>
<path d="M2086.8,917.6 C2095.1,916.0 2134.5,927.6 2153.9,927.6 C2173.4,927.6 2203.6,915.6 2203.6,917.6 C2203.6,919.7 2170.5,936.7 2153.9,940.0 C2137.3,943.3 2115.4,941.2 2104.2,937.5 C2093.0,933.8 2078.6,919.3 2086.8,917.6Z" fill="#6a4028" opacity="0.7" filter="url(#b10)"/>
<path d="M2245.8,763.6 C2248.9,750.8 2259.3,752.4 2265.7,751.2 C2272.1,749.9 2280.6,751.6 2284.3,756.1 C2288.1,760.7 2289.1,769.8 2288.1,778.5 C2287.0,787.2 2282.7,799.6 2278.1,808.3 C2273.6,817.0 2265.9,827.4 2260.7,830.7 C2255.6,834.0 2249.6,839.4 2247.1,828.2 C2244.6,817.0 2242.7,776.4 2245.8,763.6Z" fill="#d09a66" filter="url(#b2)"/>
<path d="M2253.3,778.5 C2255.8,772.7 2264.1,764.8 2268.2,763.6 C2272.3,762.4 2278.6,768.6 2278.1,771.1 C2277.7,773.5 2269.0,773.1 2265.7,778.5 C2262.4,783.9 2260.3,800.0 2258.3,803.4 C2256.2,806.7 2254.1,802.5 2253.3,798.4 C2252.5,794.2 2250.8,784.3 2253.3,778.5Z" fill="#8a5634" opacity="0.8" filter="url(#b2)"/>
<path d="M2014.8,699.0 C2014.0,689.9 2014.8,679.1 2017.3,669.2 C2019.8,659.3 2023.9,648.5 2029.7,639.4 C2035.5,630.3 2042.9,622.8 2052.0,614.5 C2061.2,606.3 2072.3,596.0 2084.3,589.7 C2096.4,583.4 2109.2,579.3 2124.1,576.8 C2139.0,574.2 2158.1,573.8 2173.8,574.3 C2189.5,574.8 2205.3,577.2 2218.5,579.8 C2231.8,582.3 2243.4,585.1 2253.3,589.7 C2263.2,594.2 2271.4,599.6 2278.1,607.1 C2284.8,614.5 2290.3,624.1 2293.5,634.4 C2296.8,644.8 2297.5,656.8 2297.5,669.2 C2297.5,681.6 2295.3,697.3 2293.5,708.9 C2291.8,720.5 2289.2,731.3 2286.8,738.8 C2284.5,746.2 2283.7,751.4 2279.4,753.7 C2275.0,755.9 2265.9,752.0 2260.7,752.4 C2255.6,752.8 2252.9,757.2 2248.3,756.1 C2243.8,755.1 2238.8,749.5 2233.4,746.2 C2228.0,742.9 2223.1,739.9 2216.0,736.3 C2209.0,732.6 2198.6,727.5 2191.2,724.3 C2183.7,721.2 2177.5,719.2 2171.3,717.6 C2165.1,716.1 2160.1,714.9 2153.9,715.2 C2147.7,715.4 2141.5,717.7 2134.0,719.4 C2126.6,721.0 2116.6,722.3 2109.2,725.1 C2101.7,727.9 2094.3,731.9 2089.3,736.3 C2084.3,740.6 2083.9,749.1 2079.4,751.2 C2074.8,753.3 2068.6,749.5 2062.0,748.7 C2055.4,747.9 2046.3,750.4 2039.6,746.2 C2033.0,742.1 2026.4,731.7 2022.2,723.9 C2018.1,716.0 2015.6,708.1 2014.8,699.0Z" fill="#14161b" filter="url(#b2)"/>
<path d="M2074.4,644.3 C2083.9,633.6 2103.4,619.5 2119.1,614.5 C2134.9,609.6 2163.0,609.6 2168.8,614.5 C2174.6,619.5 2162.2,635.2 2153.9,644.3 C2145.6,653.5 2131.6,661.7 2119.1,669.2 C2106.7,676.6 2088.9,687.4 2079.4,689.1 C2069.9,690.7 2062.8,686.6 2062.0,679.1 C2061.2,671.7 2064.9,655.1 2074.4,644.3Z" fill="#4b505a" opacity="0.8" filter="url(#b10)"/>
<path d="M2178.8,614.5 C2182.9,603.8 2214.0,601.3 2228.4,604.6 C2242.9,607.9 2258.3,623.6 2265.7,634.4 C2273.2,645.2 2276.9,660.1 2273.2,669.2 C2269.4,678.3 2254.9,689.1 2243.4,689.1 C2231.8,689.1 2214.4,681.6 2203.6,669.2 C2192.8,656.8 2174.6,625.3 2178.8,614.5Z" fill="#474c56" opacity="0.75" filter="url(#b10)"/>
<path d="M2163.9,629.4 C2165.9,618.7 2174.6,617.8 2178.8,624.5 C2182.9,631.1 2188.7,655.1 2188.7,669.2 C2188.7,683.3 2182.5,705.6 2178.8,708.9 C2175.0,712.3 2168.8,702.3 2166.3,689.1 C2163.9,675.8 2161.8,640.2 2163.9,629.4Z" fill="#0c0d11" opacity="0.6" filter="url(#b10)"/>
<path d="M2159.4,681.6 L2156.9,713.9" stroke="#b98a5c" stroke-width="7" fill="none" filter="url(#b2)"/>
<path d="M2054.5,659.3 L2084.3,629.4" stroke="#6a707c" stroke-width="5" opacity="0.55" fill="none" filter="url(#b2)"/>
<path d="M2069.4,679.1 L2109.2,639.4" stroke="#6a707c" stroke-width="5" opacity="0.55" fill="none" filter="url(#b2)"/>
<path d="M2094.3,699.0 L2134.0,649.3" stroke="#6a707c" stroke-width="5" opacity="0.55" fill="none" filter="url(#b2)"/>
<path d="M2119.1,704.0 L2153.9,656.8" stroke="#6a707c" stroke-width="5" opacity="0.55" fill="none" filter="url(#b2)"/>
<path d="M2193.7,699.0 L2213.5,644.3" stroke="#6a707c" stroke-width="5" opacity="0.55" fill="none" filter="url(#b2)"/>
<path d="M2218.5,708.9 L2243.4,656.8" stroke="#6a707c" stroke-width="5" opacity="0.55" fill="none" filter="url(#b2)"/>
<path d="M2243.4,713.9 L2268.2,669.2" stroke="#6a707c" stroke-width="5" opacity="0.55" fill="none" filter="url(#b2)"/>
<path d="M2084.3,614.5 L2129.1,594.7" stroke="#6a707c" stroke-width="5" opacity="0.55" fill="none" filter="url(#b2)"/>
<path d="M2198.6,604.6 L2243.4,604.6" stroke="#6a707c" stroke-width="5" opacity="0.55" fill="none" filter="url(#b2)"/>
<path d="M2062.0,694.0 L2089.3,659.3" stroke="#08090c" stroke-width="7" opacity="0.8" fill="none" filter="url(#b2)"/>
<path d="M2109.2,713.9 L2139.0,669.2" stroke="#08090c" stroke-width="7" opacity="0.8" fill="none" filter="url(#b2)"/>
<path d="M2203.6,713.9 L2226.0,664.2" stroke="#08090c" stroke-width="7" opacity="0.8" fill="none" filter="url(#b2)"/>
<path d="M2258.3,728.8 L2278.1,689.1" stroke="#08090c" stroke-width="7" opacity="0.8" fill="none" filter="url(#b2)"/>
<path d="M2228.4,738.8 C2230.1,734.2 2245.0,727.6 2253.3,728.8 C2261.6,730.1 2277.3,742.1 2278.1,746.2 C2279.0,750.4 2264.1,752.0 2258.3,753.7 C2252.5,755.3 2248.3,758.6 2243.4,756.1 C2238.4,753.7 2226.8,743.3 2228.4,738.8Z" fill="#6a5244" opacity="0.55" filter="url(#b4)"/>
<path d="M2024.7,733.8 C2033.8,728.4 2072.3,742.9 2079.4,751.2 C2086.4,759.5 2071.1,773.1 2067.0,783.5 C2062.8,793.8 2059.1,807.5 2054.5,813.3 C2050.0,819.1 2044.6,823.2 2039.6,818.3 C2034.7,813.3 2027.2,797.6 2024.7,783.5 C2022.2,769.4 2015.6,739.2 2024.7,733.8Z" fill="#0e1016" opacity="0.95" filter="url(#b4)"/>
<path d="M2291.8,614.5 C2297.3,609.9 2313.5,614.5 2327.8,616.5 C2342.1,618.6 2364.3,621.5 2377.5,627.0 C2390.8,632.4 2401.0,641.4 2407.3,649.3 C2413.6,657.2 2416.1,665.5 2415.3,674.2 C2414.5,682.9 2407.8,694.9 2402.4,701.5 C2396.9,708.1 2387.5,708.1 2382.5,713.9 C2377.5,719.7 2377.5,728.8 2372.5,736.3 C2367.6,743.7 2359.3,754.1 2352.7,758.6 C2346.0,763.2 2338.4,759.0 2332.8,763.6 C2327.2,768.2 2323.3,782.4 2319.1,786.0 C2315.0,789.5 2311.9,788.4 2308.0,784.7 C2304.0,781.0 2298.4,771.3 2295.5,763.6 C2292.6,755.9 2289.3,747.0 2290.6,738.8 C2291.8,730.5 2301.5,723.9 2303.0,713.9 C2304.4,704.0 2300.6,690.7 2299.3,679.1 C2297.9,667.5 2296.3,655.1 2295.0,644.3 C2293.8,633.6 2286.3,619.2 2291.8,614.5Z" fill="#c59670" filter="url(#b2)"/>
<path d="M2303.0,622.0 C2310.4,618.7 2336.5,619.5 2352.7,624.5 C2368.8,629.4 2390.8,642.7 2399.9,651.8 C2409.0,660.9 2409.4,676.2 2407.3,679.1 C2405.3,682.0 2397.4,674.6 2387.5,669.2 C2377.5,663.8 2361.0,651.0 2347.7,646.8 C2334.5,642.7 2315.4,648.5 2308.0,644.3 C2300.5,640.2 2295.5,625.3 2303.0,622.0Z" fill="#dcae86" opacity="0.8" filter="url(#b4)"/>
<path d="M2303.0,679.1 C2307.5,677.5 2322.9,687.8 2332.8,689.1 C2342.7,690.3 2359.3,684.5 2362.6,686.6 C2365.9,688.7 2359.3,698.6 2352.7,701.5 C2346.0,704.4 2330.7,704.4 2322.9,704.0 C2315.0,703.6 2308.8,703.1 2305.5,699.0 C2302.2,694.9 2298.4,680.8 2303.0,679.1Z" fill="#6a4030" opacity="0.85" filter="url(#b4)"/>
<path d="M2295.5,738.8 C2296.8,732.1 2306.3,729.6 2310.4,733.8 C2314.6,737.9 2319.5,755.3 2320.4,763.6 C2321.2,771.9 2318.3,781.8 2315.4,783.5 C2312.5,785.1 2306.3,781.0 2303.0,773.5 C2299.7,766.1 2294.3,745.4 2295.5,738.8Z" fill="#d89c8c" opacity="0.8" filter="url(#b4)"/>
<path d="M2322.9,634.4 L2320.4,679.1" stroke="#7a4c34" stroke-width="4.5" opacity="0.7" fill="none" filter="url(#b2)"/>
<path d="M2347.7,639.4 L2345.2,684.1" stroke="#7a4c34" stroke-width="4.5" opacity="0.7" fill="none" filter="url(#b2)"/>
<path d="M2375.0,651.8 L2370.1,689.1" stroke="#7a4c34" stroke-width="4.5" opacity="0.7" fill="none" filter="url(#b2)"/>
<path d="M2332.8,728.8 L2352.7,713.9" stroke="#7a4c34" stroke-width="4.5" opacity="0.7" fill="none" filter="url(#b2)"/>
<path d="M2352.7,738.8 L2370.1,718.9" stroke="#7a4c34" stroke-width="4.5" opacity="0.7" fill="none" filter="url(#b2)"/>
</g>
<g clip-path="url(#cp2)">
<rect x="1367" y="1274" width="1477" height="862" fill="#080d19"/>
<linearGradient id="g2" x1="0" y1="0" x2="0" y2="1"><stop offset="0" stop-color="#080d19"/><stop offset="0.45" stop-color="#0b1016"/><stop offset="1" stop-color="#0d1316"/></linearGradient>
<rect x="1367" y="1740" width="1477" height="400" fill="url(#g2)"/>
<path d="M1367.0,1922.7 L1781.7,1902.6 L1761.6,2153.6 L1367.0,2153.6Z" fill="#12181a" filter="url(#b25)"/>
<path d="M2439.1,1847.8 L2844.0,1793.5 L2844.0,2141.3 L2439.1,2141.3Z" fill="#0b110f" filter="url(#b25)"/>
<path d="M1480.5,1556.2 L1651.2,1556.2 L1651.2,1641.6 L1480.5,1641.6Z" fill="#10151c" filter="url(#b4)"/>
<path d="M1525.7,1651.6 L1601.0,1651.6 L1601.0,1691.8 L1525.7,1691.8Z" fill="#1a2226" filter="url(#b10)" opacity="0.8"/>
<g filter="url(#b2)">
<path d="M1435.3,1615.5 L1444.3,1615.5 L1444.3,1625.5 L1435.3,1625.5Z" fill="#b8ccf0"/>
<path d="M1449.4,1615.5 L1459.4,1615.5 L1459.4,1625.5 L1449.4,1625.5Z" fill="#9ab0e0"/>
<path d="M1440.3,1594.4 L1467.9,1594.4 L1467.9,1599.4 L1440.3,1599.4Z" fill="#5a6a8a"/>
<ellipse cx="1683.8" cy="1593.9" rx="8" ry="5" fill="#e8f0ff"/>
<path d="M1681.3,1603.9 L1701.4,1603.9 L1701.4,1619.0 L1681.3,1619.0Z" fill="#2a3a9a"/>
<path d="M1670.2,1624.0 L1691.3,1624.0 L1691.3,1641.6 L1670.2,1641.6Z" fill="#8a6a50"/>
<path d="M1708.9,1622.5 L1739.0,1622.5 L1739.0,1639.1 L1708.9,1639.1Z" fill="#6a5444"/>
<path d="M1681.3,1655.6 L1718.9,1655.6 L1718.9,1660.6 L1681.3,1660.6Z" fill="#6a7484"/>
<circle cx="1516.6" cy="1349.4" r="3" fill="#55607a"/>
<circle cx="1553.3" cy="1485.9" r="3" fill="#353f56"/>
</g>
<g filter="url(#b2)">
<path d="M1678.8,2027.1 L1784.2,2013.1" stroke="#a4a69c" stroke-width="12.0" fill="none" opacity="1.00"/>
<path d="M1767.6,1925.2 L1799.3,1950.3" stroke="#b0b2a8" stroke-width="18.0" fill="none" opacity="1.00"/>
<path d="M1756.6,1887.6 L1765.6,1902.6" stroke="#9a9c94" stroke-width="8.0" fill="none" opacity="1.00"/>
<path d="M1711.4,1849.9 L1729.0,1865.0" stroke="#6a6e66" stroke-width="12.0" fill="none" opacity="1.00"/>
<path d="M1696.3,1819.8 L1711.4,1832.3" stroke="#4d524c" stroke-width="10.0" fill="none" opacity="1.00"/>
<path d="M1623.6,1829.8 L1701.4,1827.3" stroke="#3a4040" stroke-width="4.0" fill="none" opacity="1.00"/>
<path d="M1623.6,1859.9 L1711.4,1857.4" stroke="#3a4040" stroke-width="4.0" fill="none" opacity="1.00"/>
<path d="M1641.1,1895.1 L1673.8,1892.6" stroke="#5a5f58" stroke-width="5.0" fill="none" opacity="1.00"/>
<path d="M1370.0,1925.2 L1440.3,1917.7" stroke="#3f4540" stroke-width="5.0" fill="none" opacity="1.00"/>
<path d="M1450.4,1972.9 L1641.1,1950.3" stroke="#3f4540" stroke-width="4.0" fill="none" opacity="1.00"/>
<path d="M1425.3,2073.3 L1580.9,2043.2" stroke="#4a4f48" stroke-width="5.0" fill="none" opacity="0.80"/>
<path d="M1580.9,2043.2 L1681.3,2027.1" stroke="#62665e" stroke-width="6.0" fill="none" opacity="0.85"/>
<path d="M1370.0,1988.0 L1395.1,1985.4" stroke="#8a8c84" stroke-width="6.0" fill="none" opacity="1.00"/>
<path d="M1385.1,2078.3 L1420.2,2068.3" stroke="#8a8c84" stroke-width="8.0" fill="none" opacity="1.00"/>
<path d="M1570.8,1726.9 L1611.0,1701.8" stroke="#2a3032" stroke-width="5.0" fill="none" opacity="1.00"/>
<ellipse cx="1640.1" cy="1910.1" rx="9" ry="6" fill="#d8dad0"/>
<ellipse cx="1661.2" cy="1948.8" rx="10" ry="3" fill="#a8aaa0"/>
</g>
<path d="M1367.0,1993.0 L1440.3,1988.0 L1420.2,2133.5 L1367.0,2133.5Z" fill="#3f453c" filter="url(#b10)" opacity="0.9"/>
<g filter="url(#b4)">
<path d="M2572.3,1282.6 L2596.7,1282.6 L2596.7,1478.3 L2572.3,1478.3Z" fill="#10243c"/>
<path d="M2575.0,1317.9 L2594.0,1317.9 L2594.0,1345.1 L2575.0,1345.1Z" fill="#6aa8d8"/>
<path d="M2573.9,1350.5 L2591.3,1350.5 L2591.3,1391.3 L2573.9,1391.3Z" fill="#2f5f8c"/>
<path d="M2572.8,1429.3 L2587.0,1429.3 L2587.0,1473.9 L2572.8,1473.9Z" fill="#3f7fb4"/>
</g>
<path d="M2771.7,1587.0 L2846.7,1587.0 L2846.7,1712.0 L2771.7,1712.0Z" fill="#161e1e" filter="url(#b4)"/>
<g filter="url(#b2)">
<path d="M2776.1,1714.7 L2846.7,1714.7 L2846.7,1810.9 L2776.1,1810.9Z" fill="#2c3826"/>
<path d="M2784.2,1785.3 L2808.7,1769.0 L2825.0,1774.5 L2846.7,1755.4 L2846.7,1808.7 L2784.2,1809.8Z" fill="#809c2e"/>
<path d="M2780.4,1728.3 L2819.6,1728.3 L2819.6,1755.4 L2780.4,1755.4Z" fill="#5f7828"/>
<path d="M2776.1,1707.6 L2846.7,1707.6 L2846.7,1713.0 L2776.1,1713.0Z" fill="#5a646a"/>
</g>
<g filter="url(#b4)">
<path d="M2059.0,1597.7 L2168.0,1597.7 L2168.0,1659.2 L2059.0,1659.2Z" fill="#1a1412"/>
<path d="M2063.2,1611.7 L2077.2,1611.7 L2077.2,1645.2 L2063.2,1645.2Z" fill="#8f7d66"/>
<path d="M2089.8,1608.9 L2112.2,1608.9 L2112.2,1648.0 L2089.8,1648.0Z" fill="#5f4334"/>
<path d="M2120.5,1603.3 L2134.5,1603.3 L2134.5,1631.2 L2120.5,1631.2Z" fill="#8a725c"/>
<path d="M2151.3,1603.3 L2164.7,1603.3 L2164.7,1648.0 L2151.3,1648.0Z" fill="#6f5242"/>
<path d="M2103.8,1580.9 L2156.9,1580.9 L2156.9,1597.7 L2103.8,1597.7Z" fill="#241c44"/>
<path d="M2117.7,1653.6 L2142.9,1653.6 L2142.9,1659.2 L2117.7,1659.2Z" fill="#8a8078"/>
</g>
<g filter="url(#b2)">
<path d="M2152.7,1563.6 L2235.1,1560.8 L2235.7,1597.1 L2153.5,1599.4Z" fill="#2838dc"/>
<path d="M2168.0,1573.9 L2208.6,1572.0 L2208.9,1584.3 L2168.6,1586.5Z" fill="#cdd8ff"/>
<path d="M2168.0,1592.1 L2232.3,1589.9 L2232.3,1594.9 L2168.0,1597.1Z" fill="#93a0f2"/>
<path d="M2135.9,1703.9 L2140.1,1673.7 L2235.1,1677.1" stroke="#76888a" stroke-width="6" fill="none"/>
<path d="M2145.7,1709.5 L2251.9,1717.9" stroke="#3f5450" stroke-width="9" fill="none"/>
<path d="M2221.2,1709.5 L2223.9,1695.5 L2235.1,1696.9" stroke="#6a7a7c" stroke-width="5" fill="none"/>
<circle cx="2418.5" cy="1682.1" r="4" fill="#aab4c8"/>
<circle cx="2119.1" cy="1594.9" r="5" fill="#c8c8c0"/>
</g>
<path d="M1739.0,2136.0 L1761.6,2078.3 L1786.7,2003.0 L1801.8,1952.8 L1811.8,1902.6 L1826.9,1862.4 L1862.0,1842.4 L1912.2,1827.3 L1977.5,1807.2 L1971.7,1810.9 L2020.7,1804.3 L2085.9,1766.3 L2134.8,1712.0 L2194.6,1722.8 L2254.3,1750.0 L2303.3,1793.5 L2341.3,1847.8 L2373.9,1913.0 L2395.7,1983.7 L2409.2,2054.3 L2418.5,2138.6Z" fill="url(#sw2)" filter="url(#b2)"/>
<path d="M1731.5,2138.6 L1786.7,1952.8 L1826.9,1852.4 L1872.0,1867.5 L1862.0,2003.0 L1841.9,2138.6Z" fill="#0a1228" opacity="0.9" filter="url(#b25)"/>
<path d="M1741.5,2136.0 L1791.7,1962.9 L1826.9,1872.5 L1852.0,1882.5 L1831.9,2003.0 L1811.8,2136.0Z" fill="#0b142c" opacity="0.75" filter="url(#b10)"/>
<path d="M2254.3,1793.5 L2276.1,1956.5 L2265.2,2135.9 L2297.8,2135.9 L2303.3,1956.5 L2287.0,1820.7Z" fill="#0d1838" opacity="0.5" filter="url(#b10)"/>
<path d="M1852.2,1773.8 C1864.3,1771.0 1885.3,1787.3 1905.3,1790.5 C1925.4,1793.8 1959.4,1790.1 1972.4,1793.3 C1985.5,1796.6 1986.4,1803.6 1983.6,1810.1 C1980.8,1816.6 1971.9,1824.1 1955.6,1832.5 C1939.3,1840.8 1906.7,1854.8 1885.8,1860.4 C1864.8,1866.0 1838.7,1874.8 1829.9,1866.0 C1821.0,1857.1 1828.9,1822.7 1832.7,1807.3 C1836.4,1791.9 1840.1,1776.6 1852.2,1773.8Z" fill="#070b16" opacity="0.95" filter="url(#b10)"/>
<path d="M1972.4,1776.6 C1975.2,1767.6 1993.8,1770.0 2000.4,1754.2 C2006.9,1738.4 2006.2,1696.9 2011.5,1681.5 C2016.9,1666.2 2025.0,1662.9 2032.5,1662.0 C2040.0,1661.0 2045.8,1669.9 2056.3,1675.9 C2066.7,1682.0 2081.9,1692.2 2095.4,1698.3 C2108.9,1704.5 2137.3,1702.6 2137.3,1712.8 C2137.3,1723.1 2111.7,1746.4 2095.4,1759.8 C2079.1,1773.2 2058.1,1785.3 2039.5,1793.3 C2020.9,1801.3 1994.8,1810.7 1983.6,1807.9 C1972.4,1805.1 1969.6,1785.5 1972.4,1776.6Z" fill="#bb8656" filter="url(#b2)"/>
<path d="M2039.5,1681.5 C2051.6,1676.4 2081.4,1700.6 2095.4,1706.7 C2109.4,1712.7 2125.7,1709.0 2123.3,1717.9 C2121.0,1726.7 2095.4,1749.5 2081.4,1759.8 C2067.4,1770.0 2049.3,1783.1 2039.5,1779.4 C2029.7,1775.6 2022.7,1753.7 2022.7,1737.4 C2022.7,1721.1 2027.4,1686.7 2039.5,1681.5Z" fill="#d6a472" opacity="0.8" filter="url(#b10)"/>
<path d="M1938.9,1790.5 C1943.5,1784.5 1972.4,1772.4 1983.6,1765.4 C1994.8,1758.4 2001.3,1746.8 2005.9,1748.6 C2010.6,1750.5 2014.3,1767.2 2011.5,1776.6 C2008.7,1785.9 1998.5,1800.3 1989.2,1804.5 C1979.9,1808.7 1964.0,1804.0 1955.6,1801.7 C1947.3,1799.4 1934.2,1796.6 1938.9,1790.5Z" fill="#5a3a24" opacity="0.8" filter="url(#b10)"/>
<path d="M1980.8,1809.0 C1990.6,1806.6 2020.4,1802.7 2039.5,1794.7 C2058.6,1786.8 2079.0,1774.7 2095.4,1761.2 C2111.8,1747.6 2130.8,1721.4 2137.9,1713.4" stroke="#0b1224" stroke-width="7" fill="none" filter="url(#b2)"/>
<path d="M1822.9,1620.1 C1819.9,1626.6 1818.9,1635.4 1820.1,1642.4 C1821.3,1649.4 1826.4,1656.8 1829.9,1662.0 C1833.4,1667.1 1840.1,1667.1 1841.1,1673.2 C1842.0,1679.2 1836.5,1690.9 1835.5,1698.3 C1834.4,1705.8 1833.5,1713.2 1834.9,1717.9 C1836.3,1722.5 1840.0,1724.6 1843.8,1726.3 C1847.7,1727.9 1854.8,1724.9 1857.8,1727.7 C1860.8,1730.4 1860.7,1738.1 1862.0,1743.0 C1863.3,1747.9 1862.2,1751.8 1865.6,1757.0 C1869.1,1762.2 1876.4,1769.1 1883.0,1774.3 C1889.6,1779.5 1896.0,1785.5 1905.3,1788.3 C1914.6,1791.1 1927.7,1793.0 1938.9,1791.1 C1950.1,1789.2 1962.2,1783.3 1972.4,1777.1 C1982.7,1771.0 1993.8,1765.5 2000.4,1754.2 C2006.9,1742.9 2009.7,1726.3 2011.5,1709.5 C2013.4,1692.7 2013.4,1672.2 2011.5,1653.6 C2009.7,1635.0 2005.0,1610.7 2000.4,1597.7 C1995.7,1584.6 1995.7,1578.1 1983.6,1575.3 C1971.5,1572.5 1944.0,1579.1 1927.7,1580.9 C1911.4,1582.8 1897.4,1584.2 1885.8,1586.5 C1874.1,1588.8 1865.7,1592.1 1857.8,1594.9 C1849.9,1597.7 1844.1,1599.1 1838.3,1603.3 C1832.4,1607.5 1825.9,1613.5 1822.9,1620.1Z" fill="#bf8c5a" filter="url(#b2)"/>
<path d="M1885.8,1631.2 C1896.9,1617.7 1938.4,1610.7 1955.6,1614.5 C1972.9,1618.2 1985.5,1637.8 1989.2,1653.6 C1992.9,1669.4 1988.2,1695.5 1978.0,1709.5 C1967.8,1723.5 1942.6,1739.8 1927.7,1737.4 C1912.8,1735.1 1895.6,1713.2 1888.6,1695.5 C1881.6,1677.8 1874.6,1644.7 1885.8,1631.2Z" fill="#d6a26c" opacity="0.8" filter="url(#b10)"/>
<path d="M1841.1,1681.5 C1845.2,1676.9 1861.1,1686.7 1866.2,1692.7 C1871.3,1698.8 1876.0,1713.2 1871.8,1717.9 C1867.6,1722.5 1846.2,1726.7 1841.1,1720.7 C1835.9,1714.6 1836.9,1686.2 1841.1,1681.5Z" fill="#e0b07c" opacity="0.7" filter="url(#b4)"/>
<path d="M1818.7,1625.6 C1822.9,1619.6 1840.6,1621.4 1852.2,1622.8 C1863.9,1624.2 1883.9,1629.4 1888.6,1634.0 C1893.2,1638.7 1886.2,1647.5 1880.2,1650.8 C1874.1,1654.1 1858.3,1650.3 1852.2,1653.6 C1846.2,1656.8 1848.0,1669.4 1843.8,1670.4 C1839.7,1671.3 1831.3,1666.6 1827.1,1659.2 C1822.9,1651.7 1814.5,1631.7 1818.7,1625.6Z" fill="#2a1a12" opacity="0.95" filter="url(#b4)"/>
<path d="M1843.8,1656.4 C1847.1,1655.9 1856.9,1655.1 1863.4,1653.6 C1869.9,1652.1 1879.7,1648.5 1883.0,1647.4" stroke="#20140e" stroke-width="8" fill="none" filter="url(#b2)"/>
<path d="M1852.2,1720.7 C1856.0,1716.9 1873.7,1711.3 1880.2,1712.3 C1886.7,1713.2 1892.8,1722.1 1891.4,1726.3 C1890.0,1730.4 1877.4,1736.0 1871.8,1737.4 C1866.2,1738.8 1861.1,1737.4 1857.8,1734.6 C1854.6,1731.8 1848.5,1724.4 1852.2,1720.7Z" fill="#6a4028" opacity="0.7" filter="url(#b4)"/>
<path d="M1860.6,1740.8 C1864.1,1738.6 1878.3,1740.7 1885.8,1742.5 C1893.2,1744.2 1903.0,1747.6 1905.3,1751.4 C1907.7,1755.2 1904.4,1762.8 1899.7,1765.4 C1895.1,1767.9 1883.2,1768.4 1877.4,1766.8 C1871.6,1765.1 1867.6,1759.9 1864.8,1755.6 C1862.0,1751.3 1857.1,1743.0 1860.6,1740.8Z" fill="#9c6058" filter="url(#b2)"/>
<path d="M1877.4,1773.8 C1877.4,1771.9 1892.3,1778.9 1905.3,1779.4 C1918.4,1779.8 1941.7,1780.8 1955.6,1776.6 C1969.6,1772.4 1986.4,1753.7 1989.2,1754.2 C1992.0,1754.7 1980.8,1772.8 1972.4,1779.4 C1964.0,1785.9 1950.1,1791.5 1938.9,1793.3 C1927.7,1795.2 1915.6,1793.8 1905.3,1790.5 C1895.1,1787.3 1877.4,1775.6 1877.4,1773.8Z" fill="#4a2c1c" opacity="0.75" filter="url(#b10)"/>
<path d="M1905.3,1580.9 C1909.1,1574.9 1940.3,1564.2 1955.6,1561.4 C1971.0,1558.6 1988.2,1558.1 1997.6,1564.2 C2006.9,1570.2 2013.9,1590.2 2011.5,1597.7 C2009.2,1605.1 1996.6,1608.9 1983.6,1608.9 C1970.5,1608.9 1946.3,1602.3 1933.3,1597.7 C1920.2,1593.0 1901.6,1587.0 1905.3,1580.9Z" fill="#8c7c6e" opacity="0.9" filter="url(#b10)"/>
<path d="M1994.8,1597.7 C1995.2,1590.0 1998.5,1582.8 2003.2,1579.5 C2007.8,1576.3 2017.8,1574.2 2022.7,1578.1 C2027.6,1582.1 2031.1,1593.5 2032.5,1603.3 C2033.9,1613.1 2033.2,1627.0 2031.1,1636.8 C2029.0,1646.6 2023.6,1659.2 2019.9,1662.0 C2016.2,1664.8 2012.0,1659.6 2008.7,1653.6 C2005.5,1647.5 2002.7,1635.0 2000.4,1625.6 C1998.0,1616.3 1994.3,1605.4 1994.8,1597.7Z" fill="#cf9a68" filter="url(#b2)"/>
<path d="M1999.0,1600.5 C2000.1,1597.7 2002.2,1586.6 2005.9,1583.7 C2009.7,1580.8 2017.6,1579.0 2021.3,1583.2 C2025.0,1587.4 2027.4,1599.0 2028.3,1608.9 C2029.2,1618.7 2028.5,1634.0 2026.9,1642.4 C2025.3,1650.8 2019.9,1656.4 2018.5,1659.2" stroke="#7a4226" stroke-width="7" fill="none" filter="url(#b2)"/>
<path d="M2000.4,1608.9 C2002.2,1608.4 2008.7,1604.2 2011.5,1606.1 C2014.3,1607.9 2016.2,1617.7 2017.1,1620.1" stroke="#8a5030" stroke-width="5" fill="none" filter="url(#b2)"/>
<path d="M1796.3,1608.9 C1796.3,1602.1 1798.7,1590.2 1804.7,1580.9 C1810.8,1571.6 1822.4,1560.9 1832.7,1553.0 C1842.9,1545.1 1856.4,1540.9 1866.2,1533.4 C1876.0,1526.0 1881.1,1516.2 1891.4,1508.3 C1901.6,1500.3 1914.2,1492.4 1927.7,1485.9 C1941.2,1479.4 1958.4,1471.5 1972.4,1469.1 C1986.4,1466.8 2000.8,1466.8 2011.5,1471.9 C2022.3,1477.0 2030.2,1489.2 2036.7,1499.9 C2043.2,1510.6 2046.9,1523.6 2050.7,1536.2 C2054.4,1548.8 2057.0,1563.2 2059.0,1575.3 C2061.1,1587.4 2062.9,1599.6 2063.2,1608.9 C2063.6,1618.2 2063.4,1628.4 2061.3,1631.2 C2059.2,1634.0 2054.3,1630.3 2050.7,1625.6 C2047.0,1621.0 2043.2,1610.7 2039.5,1603.3 C2035.8,1595.8 2033.0,1586.5 2028.3,1580.9 C2023.6,1575.3 2017.1,1572.5 2011.5,1569.7 C2005.9,1566.9 2001.3,1566.5 1994.8,1564.2 C1988.2,1561.8 1978.9,1556.2 1972.4,1555.8 C1965.9,1555.3 1962.2,1559.0 1955.6,1561.4 C1949.1,1563.7 1940.7,1567.2 1933.3,1569.7 C1925.8,1572.3 1918.8,1574.6 1910.9,1576.7 C1903.0,1578.8 1893.2,1582.0 1885.8,1582.3 C1878.3,1582.6 1870.9,1577.3 1866.2,1578.7 C1861.5,1580.1 1862.0,1587.3 1857.8,1590.7 C1853.6,1594.1 1846.6,1595.4 1841.1,1599.1 C1835.5,1602.8 1830.3,1609.3 1824.3,1613.1 C1818.2,1616.8 1809.4,1622.1 1804.7,1621.4 C1800.1,1620.7 1796.3,1615.6 1796.3,1608.9Z" fill="#14161c" filter="url(#b2)"/>
<path d="M1871.8,1547.4 C1876.5,1538.1 1892.3,1522.2 1905.3,1513.8 C1918.4,1505.5 1944.5,1494.3 1950.1,1497.1 C1955.6,1499.9 1946.3,1520.4 1938.9,1530.6 C1931.4,1540.9 1915.6,1552.0 1905.3,1558.6 C1895.1,1565.1 1883.0,1571.6 1877.4,1569.7 C1871.8,1567.9 1867.1,1556.7 1871.8,1547.4Z" fill="#555a66" opacity="0.8" filter="url(#b10)"/>
<path d="M1972.4,1485.9 C1975.2,1478.4 2000.4,1479.4 2011.5,1485.9 C2022.7,1492.4 2036.7,1513.8 2039.5,1525.0 C2042.3,1536.2 2035.8,1552.0 2028.3,1553.0 C2020.9,1553.9 2004.1,1541.8 1994.8,1530.6 C1985.5,1519.4 1969.6,1493.4 1972.4,1485.9Z" fill="#4a4f5a" opacity="0.7" filter="url(#b10)"/>
<path d="M1927.7,1569.7 C1927.7,1566.0 1960.3,1553.9 1972.4,1553.0 C1984.5,1552.0 2000.4,1560.4 2000.4,1564.2 C2000.4,1567.9 1984.5,1574.4 1972.4,1575.3 C1960.3,1576.3 1927.7,1573.5 1927.7,1569.7Z" fill="#8a8078" opacity="0.55" filter="url(#b10)"/>
<path d="M1843.8,1586.5 L1871.8,1550.2" stroke="#727886" stroke-width="5" opacity="0.5" fill="none" filter="url(#b2)"/>
<path d="M1866.2,1575.3 L1894.2,1536.2" stroke="#727886" stroke-width="5" opacity="0.5" fill="none" filter="url(#b2)"/>
<path d="M1891.4,1569.7 L1919.3,1522.2" stroke="#727886" stroke-width="5" opacity="0.5" fill="none" filter="url(#b2)"/>
<path d="M1916.5,1564.2 L1944.5,1513.8" stroke="#727886" stroke-width="5" opacity="0.5" fill="none" filter="url(#b2)"/>
<path d="M1944.5,1553.0 L1972.4,1499.9" stroke="#727886" stroke-width="5" opacity="0.5" fill="none" filter="url(#b2)"/>
<path d="M1983.6,1541.8 L2000.4,1491.5" stroke="#727886" stroke-width="5" opacity="0.5" fill="none" filter="url(#b2)"/>
<path d="M2011.5,1553.0 L2028.3,1508.3" stroke="#727886" stroke-width="5" opacity="0.5" fill="none" filter="url(#b2)"/>
</g>
</svg>
<!-- sec_vm -->
<div class="a" style="left:-40px;top:1184px;width:1340px;height:1656px;border-radius:0 24px 30px 0;background:#fff;box-shadow:0 0 0 1.5px rgba(0,0,0,0.14),0 10px 42px rgba(0,0,0,0.24),0 -6px 40px rgba(0,0,0,0.08);overflow:hidden;"><div class="a" style="left:0;top:0;width:1340px;height:114px;background:#ededef;border-bottom:3px solid #d9d9db;"></div><div class="a" style="left:0;top:229px;width:1334px;height:500px;background:#f3f3f6;"></div></div>
<div class="t" style="left:79.0px;top:1222.6px;font-size:40.0px;line-height:40.0px;letter-spacing:0.00px;color:#b6b6b8;transform:scaleX(1.0185);transform-origin:0 0;">Goodnight</div>
<svg style="left:640px;top:1190px" width="660" height="110" viewBox="640 1190 660 110"><g fill="none" stroke="#c6c6c8" stroke-width="3" stroke-linecap="round" stroke-linejoin="round">
<path d="M678,1232 H672 Q669,1232 669,1235 V1255 Q669,1258 672,1258 H698 Q701,1258 701,1255 V1235 Q701,1232 698,1232 H692"/>
<path d="M685,1245 V1219 M678,1225 L685,1218 L692,1225"/>
<path d="M789,1256 C778,1247 771,1240 771,1232 C771,1226 776,1222 781,1222 C785,1222 788,1225 789,1228 C790,1225 793,1222 797,1222 C802,1222 807,1226 807,1232 C807,1240 800,1247 789,1256Z"/>
<path d="M874,1226 H906 M884,1226 V1221 Q884,1219 886,1219 H894 Q896,1219 896,1221 V1226 M877,1227 L879,1255 Q879,1258 882,1258 H898 Q901,1258 901,1255 L903,1227"/>
<path d="M884,1233 V1251 M890,1233 V1251 M896,1233 V1251" stroke-width="2.6"/>
<path d="M974,1228 H1012 M974,1240 H1012 M974,1252 H1012" stroke-width="3"/>
</g><g fill="#ededef" stroke="#c6c6c8" stroke-width="2.6"><circle cx="999" cy="1228" r="4"/><circle cx="985" cy="1240" r="4"/><circle cx="999" cy="1252" r="4"/></g>
<g fill="none" stroke="#c6c6c8" stroke-width="3.4" stroke-linejoin="round"><path d="M1085,1219 H1115 Q1121,1219 1121,1225 V1242 Q1121,1248 1115,1248 H1098 L1090,1257 V1248 H1085 Q1079,1248 1079,1242 V1225 Q1079,1219 1085,1219Z"/></g>
<g fill="#c6c6c8"><circle cx="1094" cy="1232" r="3.6"/><circle cx="1106" cy="1232" r="3.6"/><path d="M1090.5,1232 q0,6 5,8 l0.8,-1.5 q-2.5,-2 -2.2,-5Z"/><path d="M1102.5,1232 q0,6 5,8 l0.8,-1.5 q-2.5,-2 -2.2,-5Z"/></g>
<rect x="1166" y="1211" width="110" height="61" rx="12" fill="#efeff1" stroke="#e1e1e3" stroke-width="2"/>
</svg>
<div class="t" style="left:1187.0px;top:1220.3px;font-size:38.0px;line-height:38.0px;letter-spacing:0.00px;color:#c4c4c6;transform:scaleX(1.0385);transform-origin:0 0;">Edit</div>
<svg style="left:0;top:1412px" width="1296" height="502" viewBox="0 1412 1296 502"><rect x="5.9" y="1569.8" width="2.6" height="185.9" fill="#747476"/><rect x="17.8" y="1564.6" width="2.6" height="196.1" fill="#747476"/><rect x="29.4" y="1571.5" width="4.8" height="182.4" fill="#bcbcbe"/><rect x="42.1" y="1592.0" width="2.6" height="141.4" fill="#747476"/><rect x="56.8" y="1598.8" width="2.6" height="127.8" fill="#747476"/><rect x="69.0" y="1550.3" width="4.8" height="224.8" fill="#bcbcbe"/><rect x="80.7" y="1557.8" width="2.6" height="209.8" fill="#747476"/><rect x="95.7" y="1537.3" width="2.6" height="250.8" fill="#747476"/><rect x="107.7" y="1523.0" width="2.6" height="279.5" fill="#747476"/><rect x="119.9" y="1492.9" width="4.8" height="339.6" fill="#bcbcbe"/><rect x="134.3" y="1523.0" width="2.6" height="279.5" fill="#747476"/><rect x="145.9" y="1534.6" width="2.6" height="256.2" fill="#747476"/><rect x="158.5" y="1592.0" width="4.8" height="141.4" fill="#bcbcbe"/><rect x="170.1" y="1590.3" width="4.8" height="144.9" fill="#bcbcbe"/><rect x="184.9" y="1585.1" width="2.6" height="155.1" fill="#747476"/><rect x="196.9" y="1598.8" width="2.6" height="127.8" fill="#747476"/><rect x="209.4" y="1615.2" width="4.8" height="95.0" fill="#bcbcbe"/><rect x="223.8" y="1491.2" width="2.6" height="343.0" fill="#747476"/><rect x="235.8" y="1486.8" width="2.6" height="351.9" fill="#747476"/><rect x="248.4" y="1502.1" width="4.8" height="321.1" fill="#bcbcbe"/><rect x="260.0" y="1540.7" width="4.8" height="243.9" fill="#bcbcbe"/><rect x="274.8" y="1510.0" width="2.6" height="305.4" fill="#747476"/><rect x="287.3" y="1514.1" width="4.8" height="297.2" fill="#bcbcbe"/><rect x="298.9" y="1523.0" width="4.8" height="279.5" fill="#bcbcbe"/><rect x="313.4" y="1484.4" width="2.6" height="356.7" fill="#747476"/><rect x="325.7" y="1479.9" width="2.6" height="365.6" fill="#747476"/><rect x="337.9" y="1499.7" width="4.8" height="325.9" fill="#bcbcbe"/><rect x="349.5" y="1502.1" width="4.8" height="321.1" fill="#bcbcbe"/><rect x="364.3" y="1492.9" width="2.6" height="339.6" fill="#747476"/><rect x="377.5" y="1491.2" width="4.8" height="343.0" fill="#bcbcbe"/><rect x="388.4" y="1526.0" width="4.8" height="273.3" fill="#bcbcbe"/><rect x="403.2" y="1534.6" width="2.6" height="256.2" fill="#747476"/><rect x="415.2" y="1514.1" width="2.6" height="297.2" fill="#747476"/><rect x="427.4" y="1475.1" width="4.8" height="375.1" fill="#bcbcbe"/><rect x="439.3" y="1465.6" width="4.8" height="394.3" fill="#bcbcbe"/><rect x="453.8" y="1523.0" width="2.6" height="279.5" fill="#747476"/><rect x="467.4" y="1520.2" width="4.8" height="284.9" fill="#bcbcbe"/><rect x="478.3" y="1526.0" width="4.8" height="273.3" fill="#bcbcbe"/><rect x="492.7" y="1530.5" width="2.6" height="264.4" fill="#747476"/><rect x="504.7" y="1523.0" width="2.6" height="279.5" fill="#747476"/><rect x="516.9" y="1555.4" width="4.8" height="214.6" fill="#bcbcbe"/><rect x="531.3" y="1528.8" width="2.6" height="267.9" fill="#747476"/><rect x="543.6" y="1546.5" width="2.6" height="232.3" fill="#747476"/><rect x="556.9" y="1510.0" width="4.8" height="305.4" fill="#bcbcbe"/><rect x="567.8" y="1558.5" width="4.8" height="208.4" fill="#bcbcbe"/><rect x="582.2" y="1550.3" width="2.6" height="224.8" fill="#747476"/><rect x="594.2" y="1518.5" width="2.6" height="288.3" fill="#747476"/><rect x="621.2" y="1571.5" width="2.6" height="182.4" fill="#747476"/><rect x="633.1" y="1571.5" width="2.6" height="182.4" fill="#747476"/><rect x="647.9" y="1530.5" width="2.6" height="264.4" fill="#747476"/><rect x="657.4" y="1523.0" width="4.8" height="279.5" fill="#bcbcbe"/><rect x="671.8" y="1539.7" width="2.6" height="246.0" fill="#747476"/><rect x="686.9" y="1525.4" width="2.6" height="274.7" fill="#747476"/><rect x="697.4" y="1558.5" width="4.8" height="208.4" fill="#bcbcbe"/><rect x="710.4" y="1558.5" width="2.6" height="208.4" fill="#747476"/><rect x="722.4" y="1561.9" width="2.6" height="201.6" fill="#747476"/><rect x="737.1" y="1557.8" width="2.6" height="209.8" fill="#747476"/><rect x="746.6" y="1528.1" width="4.8" height="269.2" fill="#bcbcbe"/><rect x="761.4" y="1555.4" width="2.6" height="214.6" fill="#747476"/><rect x="776.0" y="1570.8" width="2.6" height="183.8" fill="#747476"/><rect x="788.0" y="1570.8" width="2.6" height="183.8" fill="#747476"/><rect x="799.2" y="1575.9" width="4.8" height="173.6" fill="#bcbcbe"/><rect x="812.3" y="1570.8" width="2.6" height="183.8" fill="#747476"/><rect x="826.9" y="1519.2" width="2.6" height="287.0" fill="#747476"/><rect x="839.2" y="1520.2" width="4.8" height="284.9" fill="#bcbcbe"/><rect x="851.2" y="1527.7" width="2.6" height="269.9" fill="#747476"/><rect x="865.9" y="1525.4" width="2.6" height="274.7" fill="#747476"/><rect x="877.9" y="1525.4" width="2.6" height="274.7" fill="#747476"/><rect x="890.1" y="1592.0" width="4.8" height="141.4" fill="#bcbcbe"/><rect x="901.4" y="1629.6" width="2.6" height="66.3" fill="#747476"/><rect x="916.5" y="1635.7" width="2.6" height="54.0" fill="#747476"/><rect x="928.7" y="1635.7" width="4.8" height="54.0" fill="#bcbcbe"/><rect x="940.4" y="1642.2" width="2.6" height="41.0" fill="#747476"/><rect x="955.4" y="1639.8" width="2.6" height="45.8" fill="#747476"/><rect x="967.0" y="1587.9" width="2.6" height="149.6" fill="#747476"/><rect x="978.6" y="1591.3" width="4.8" height="142.8" fill="#bcbcbe"/><rect x="994.4" y="1600.5" width="2.6" height="124.4" fill="#747476"/><rect x="1006.0" y="1591.3" width="2.6" height="142.8" fill="#747476"/><rect x="1018.2" y="1596.4" width="4.8" height="132.6" fill="#bcbcbe"/><rect x="1030.2" y="1594.0" width="2.6" height="137.3" fill="#747476"/><rect x="1044.9" y="1522.6" width="2.6" height="280.2" fill="#747476"/><rect x="1056.9" y="1510.0" width="2.6" height="305.4" fill="#747476"/><rect x="1068.8" y="1442.3" width="4.8" height="440.7" fill="#bcbcbe"/><rect x="1083.5" y="1488.8" width="2.6" height="347.8" fill="#747476"/><rect x="1095.8" y="1495.6" width="2.6" height="334.1" fill="#747476"/><rect x="1108.0" y="1518.5" width="4.8" height="288.3" fill="#bcbcbe"/><rect x="1119.7" y="1534.6" width="4.8" height="256.2" fill="#bcbcbe"/><rect x="1134.4" y="1531.5" width="2.6" height="262.4" fill="#747476"/><rect x="1146.7" y="1539.0" width="4.8" height="247.4" fill="#bcbcbe"/><rect x="1158.6" y="1523.0" width="4.8" height="279.5" fill="#bcbcbe"/><rect x="1173.0" y="1498.0" width="2.6" height="329.3" fill="#747476"/><rect x="1185.3" y="1511.0" width="2.6" height="303.4" fill="#747476"/><rect x="1197.6" y="1504.9" width="4.8" height="315.7" fill="#bcbcbe"/><rect x="1209.2" y="1516.1" width="4.8" height="293.1" fill="#bcbcbe"/><rect x="1223.9" y="1543.5" width="2.6" height="238.5" fill="#747476"/><rect x="1236.5" y="1537.3" width="4.8" height="250.8" fill="#bcbcbe"/><rect x="1248.5" y="1529.8" width="4.8" height="265.8" fill="#bcbcbe"/><rect x="1262.9" y="1528.1" width="2.6" height="269.2" fill="#747476"/><rect x="1274.5" y="1543.5" width="2.6" height="238.5" fill="#747476"/><rect x="1287.1" y="1532.2" width="4.8" height="261.0" fill="#bcbcbe"/><rect x="-7.9" y="1592.7" width="4.8" height="140.0" fill="#bcbcbe"/></svg>
<svg style="left:0;top:1912px" width="1296" height="40" viewBox="0 1912 1296 40"><g stroke="#ececf0" stroke-width="2.5"><line x1="38.7" y1="1913" x2="38.7" y2="1927"/><line x1="96.1" y1="1913" x2="96.1" y2="1927"/><line x1="153.5" y1="1913" x2="153.5" y2="1940"/><line x1="210.9" y1="1913" x2="210.9" y2="1927"/><line x1="268.3" y1="1913" x2="268.3" y2="1927"/><line x1="325.7" y1="1913" x2="325.7" y2="1927"/><line x1="383.1" y1="1913" x2="383.1" y2="1940"/><line x1="440.5" y1="1913" x2="440.5" y2="1927"/><line x1="497.9" y1="1913" x2="497.9" y2="1927"/><line x1="555.3" y1="1913" x2="555.3" y2="1927"/><line x1="612.7" y1="1913" x2="612.7" y2="1940"/><line x1="670.1" y1="1913" x2="670.1" y2="1927"/><line x1="727.5" y1="1913" x2="727.5" y2="1927"/><line x1="784.9" y1="1913" x2="784.9" y2="1927"/><line x1="842.3" y1="1913" x2="842.3" y2="1940"/><line x1="899.7" y1="1913" x2="899.7" y2="1927"/><line x1="957.1" y1="1913" x2="957.1" y2="1927"/><line x1="1014.5" y1="1913" x2="1014.5" y2="1927"/><line x1="1071.9" y1="1913" x2="1071.9" y2="1940"/><line x1="1129.3" y1="1913" x2="1129.3" y2="1927"/><line x1="1186.7" y1="1913" x2="1186.7" y2="1927"/><line x1="1244.1" y1="1913" x2="1244.1" y2="1927"/></g></svg>
<div class="t" style="left:149.0px;top:1949.6px;font-size:33.5px;line-height:33.5px;letter-spacing:0.00px;color:#cdcdd0;transform:scaleX(0.9662);transform-origin:0 0;">1:16</div>
<div class="t" style="left:378.6px;top:1949.6px;font-size:33.5px;line-height:33.5px;letter-spacing:0.00px;color:#cdcdd0;transform:scaleX(0.9662);transform-origin:0 0;">1:17</div>
<div class="t" style="left:608.2px;top:1949.6px;font-size:33.5px;line-height:33.5px;letter-spacing:0.00px;color:#cdcdd0;transform:scaleX(0.9662);transform-origin:0 0;">1:18</div>
<div class="t" style="left:837.8px;top:1949.6px;font-size:33.5px;line-height:33.5px;letter-spacing:0.00px;color:#cdcdd0;transform:scaleX(0.9662);transform-origin:0 0;">1:19</div>
<div class="t" style="left:1067.4px;top:1949.6px;font-size:33.5px;line-height:33.5px;letter-spacing:0.00px;color:#cdcdd0;transform:scaleX(0.9662);transform-origin:0 0;">1:20</div>
<div class="a" style="left:608px;top:1402px;width:4px;height:522px;background:#8fabeb;"></div>
<div class="a" style="left:600px;top:1392px;width:20px;height:20px;border-radius:50%;background:#3a72de;"></div>
<div class="a" style="left:600px;top:1914px;width:20px;height:20px;border-radius:50%;background:#3a72de;"></div>
<div class="a" style="left:21px;top:2141px;width:1179px;height:130px;border-radius:11px;background:#f3f3f5;"></div>
<svg style="left:0;top:2141px" width="1296" height="130" viewBox="0 2141 1296 130"><rect x="19.3" y="2204.7" width="2.4" height="2.6" fill="#7b7b7d"/><rect x="27.0" y="2191.1" width="2.4" height="29.8" fill="#7b7b7d"/><rect x="31.6" y="2182.2" width="5" height="47.7" fill="#c3c3c5"/><rect x="40.2" y="2182.8" width="2.4" height="46.4" fill="#7b7b7d"/><rect x="47.8" y="2185.5" width="2.4" height="41.1" fill="#7b7b7d"/><rect x="54.1" y="2179.5" width="2.4" height="53.0" fill="#7b7b7d"/><rect x="60.7" y="2184.5" width="2.4" height="43.1" fill="#7b7b7d"/><rect x="68.4" y="2187.8" width="2.4" height="36.4" fill="#7b7b7d"/><rect x="75.0" y="2182.2" width="2.4" height="47.7" fill="#7b7b7d"/><rect x="81.6" y="2189.4" width="2.4" height="33.1" fill="#7b7b7d"/><rect x="88.2" y="2189.4" width="2.4" height="33.1" fill="#7b7b7d"/><rect x="95.5" y="2185.5" width="2.4" height="41.1" fill="#7b7b7d"/><rect x="102.1" y="2185.5" width="2.4" height="41.1" fill="#7b7b7d"/><rect x="107.8" y="2172.9" width="5" height="66.2" fill="#c3c3c5"/><rect x="116.4" y="2175.5" width="2.4" height="60.9" fill="#7b7b7d"/><rect x="122.4" y="2182.2" width="2.4" height="47.7" fill="#7b7b7d"/><rect x="128.3" y="2170.6" width="5" height="70.9" fill="#c3c3c5"/><rect x="136.0" y="2172.9" width="5" height="66.2" fill="#c3c3c5"/><rect x="142.2" y="2182.2" width="5" height="47.7" fill="#c3c3c5"/><rect x="150.5" y="2175.5" width="2.4" height="60.9" fill="#7b7b7d"/><rect x="156.5" y="2191.1" width="5" height="29.8" fill="#c3c3c5"/><rect x="164.4" y="2175.5" width="2.4" height="60.9" fill="#7b7b7d"/><rect x="169.7" y="2175.5" width="5" height="60.9" fill="#c3c3c5"/><rect x="178.3" y="2191.1" width="2.4" height="29.8" fill="#7b7b7d"/><rect x="185.3" y="2170.6" width="2.4" height="70.9" fill="#7b7b7d"/><rect x="191.9" y="2175.5" width="2.4" height="60.9" fill="#7b7b7d"/><rect x="198.5" y="2179.5" width="2.4" height="53.0" fill="#7b7b7d"/><rect x="204.5" y="2170.6" width="5" height="70.9" fill="#c3c3c5"/><rect x="212.4" y="2177.8" width="2.4" height="56.3" fill="#7b7b7d"/><rect x="218.4" y="2170.6" width="5" height="70.9" fill="#c3c3c5"/><rect x="225.4" y="2170.6" width="5" height="70.9" fill="#c3c3c5"/><rect x="233.3" y="2175.5" width="2.4" height="60.9" fill="#7b7b7d"/><rect x="240.6" y="2170.6" width="2.4" height="70.9" fill="#7b7b7d"/><rect x="247.9" y="2172.9" width="2.4" height="66.2" fill="#7b7b7d"/><rect x="254.5" y="2175.5" width="2.4" height="60.9" fill="#7b7b7d"/><rect x="259.8" y="2172.9" width="2.4" height="66.2" fill="#7b7b7d"/><rect x="265.1" y="2187.8" width="5" height="36.4" fill="#c3c3c5"/><rect x="272.1" y="2185.5" width="2.4" height="41.1" fill="#7b7b7d"/><rect x="279.7" y="2182.2" width="2.4" height="47.7" fill="#7b7b7d"/><rect x="285.0" y="2185.5" width="5" height="41.1" fill="#c3c3c5"/><rect x="292.9" y="2187.8" width="2.4" height="36.4" fill="#7b7b7d"/><rect x="299.6" y="2187.8" width="2.4" height="36.4" fill="#7b7b7d"/><rect x="305.5" y="2194.4" width="5" height="23.2" fill="#c3c3c5"/><rect x="312.2" y="2187.8" width="5" height="36.4" fill="#c3c3c5"/><rect x="320.1" y="2189.4" width="2.4" height="33.1" fill="#7b7b7d"/><rect x="326.4" y="2191.1" width="5" height="29.8" fill="#c3c3c5"/><rect x="332.5" y="2170.4" width="5" height="71.2" fill="#c3c3c5"/><rect x="339.4" y="2170.4" width="5" height="71.2" fill="#c3c3c5"/><rect x="346.3" y="2170.4" width="5" height="71.2" fill="#c3c3c5"/><rect x="354.5" y="2170.4" width="2.4" height="71.2" fill="#7b7b7d"/><rect x="360.1" y="2170.4" width="5" height="71.2" fill="#c3c3c5"/><rect x="368.3" y="2170.4" width="2.4" height="71.2" fill="#7b7b7d"/><rect x="375.2" y="2170.4" width="2.4" height="71.2" fill="#7b7b7d"/><rect x="380.8" y="2170.4" width="5" height="71.2" fill="#c3c3c5"/><rect x="389.0" y="2170.4" width="2.4" height="71.2" fill="#7b7b7d"/><rect x="395.9" y="2170.4" width="2.4" height="71.2" fill="#7b7b7d"/><rect x="402.8" y="2170.4" width="2.4" height="71.2" fill="#7b7b7d"/><rect x="408.4" y="2170.4" width="5" height="71.2" fill="#c3c3c5"/><rect x="415.3" y="2170.4" width="5" height="71.2" fill="#c3c3c5"/><rect x="422.2" y="2170.4" width="5" height="71.2" fill="#c3c3c5"/><rect x="429.1" y="2170.4" width="5" height="71.2" fill="#c3c3c5"/><rect x="437.3" y="2170.4" width="2.4" height="71.2" fill="#7b7b7d"/><rect x="442.9" y="2170.4" width="5" height="71.2" fill="#c3c3c5"/><rect x="449.8" y="2170.4" width="5" height="71.2" fill="#c3c3c5"/><rect x="456.7" y="2170.4" width="5" height="71.2" fill="#c3c3c5"/><rect x="464.9" y="2170.4" width="2.4" height="71.2" fill="#7b7b7d"/><rect x="470.5" y="2170.4" width="5" height="71.2" fill="#c3c3c5"/><rect x="477.4" y="2170.4" width="5" height="71.2" fill="#c3c3c5"/><rect x="485.6" y="2170.4" width="2.4" height="71.2" fill="#7b7b7d"/><rect x="491.2" y="2170.4" width="5" height="71.2" fill="#c3c3c5"/><rect x="499.4" y="2170.4" width="2.4" height="71.2" fill="#7b7b7d"/><rect x="505.0" y="2170.4" width="5" height="71.2" fill="#c3c3c5"/><rect x="511.9" y="2170.4" width="5" height="71.2" fill="#c3c3c5"/><rect x="518.8" y="2170.4" width="5" height="71.2" fill="#c3c3c5"/><rect x="525.7" y="2170.4" width="5" height="71.2" fill="#c3c3c5"/><rect x="533.9" y="2170.4" width="2.4" height="71.2" fill="#7b7b7d"/><rect x="540.8" y="2170.4" width="2.4" height="71.2" fill="#7b7b7d"/><rect x="546.4" y="2170.4" width="5" height="71.2" fill="#c3c3c5"/><rect x="554.6" y="2170.4" width="2.4" height="71.2" fill="#7b7b7d"/><rect x="561.5" y="2170.4" width="2.4" height="71.2" fill="#7b7b7d"/><rect x="568.4" y="2170.4" width="2.4" height="71.2" fill="#7b7b7d"/><rect x="575.3" y="2170.4" width="2.4" height="71.2" fill="#7b7b7d"/><rect x="582.2" y="2170.4" width="2.4" height="71.2" fill="#7b7b7d"/><rect x="587.8" y="2170.4" width="5" height="71.2" fill="#c3c3c5"/><rect x="596.0" y="2170.4" width="2.4" height="71.2" fill="#7b7b7d"/><rect x="602.9" y="2170.4" width="2.4" height="71.2" fill="#7b7b7d"/><rect x="609.8" y="2170.4" width="2.4" height="71.2" fill="#7b7b7d"/><rect x="615.4" y="2170.4" width="5" height="71.2" fill="#c3c3c5"/><rect x="623.6" y="2170.4" width="2.4" height="71.2" fill="#7b7b7d"/><rect x="630.5" y="2170.4" width="2.4" height="71.2" fill="#7b7b7d"/><rect x="636.1" y="2170.4" width="5" height="71.2" fill="#c3c3c5"/><rect x="643.0" y="2170.4" width="5" height="71.2" fill="#c3c3c5"/><rect x="649.9" y="2170.4" width="5" height="71.2" fill="#c3c3c5"/><rect x="656.8" y="2170.4" width="5" height="71.2" fill="#c3c3c5"/><rect x="665.0" y="2170.4" width="2.4" height="71.2" fill="#7b7b7d"/><rect x="671.9" y="2170.4" width="2.4" height="71.2" fill="#7b7b7d"/><rect x="678.8" y="2170.4" width="2.4" height="71.2" fill="#7b7b7d"/><rect x="684.4" y="2170.4" width="5" height="71.2" fill="#c3c3c5"/><rect x="691.3" y="2170.4" width="5" height="71.2" fill="#c3c3c5"/><rect x="699.5" y="2170.4" width="2.4" height="71.2" fill="#7b7b7d"/><rect x="706.4" y="2170.4" width="2.4" height="71.2" fill="#7b7b7d"/><rect x="713.3" y="2170.4" width="2.4" height="71.2" fill="#7b7b7d"/><rect x="720.2" y="2176.0" width="2.4" height="60.0" fill="#7b7b7d"/><rect x="727.1" y="2170.4" width="2.4" height="71.2" fill="#7b7b7d"/><rect x="732.7" y="2170.4" width="5" height="71.2" fill="#c3c3c5"/><rect x="740.9" y="2170.4" width="2.4" height="71.2" fill="#7b7b7d"/><rect x="747.8" y="2170.4" width="2.4" height="71.2" fill="#7b7b7d"/><rect x="754.7" y="2170.4" width="2.4" height="71.2" fill="#7b7b7d"/><rect x="761.6" y="2170.4" width="2.4" height="71.2" fill="#7b7b7d"/><rect x="767.2" y="2170.4" width="5" height="71.2" fill="#c3c3c5"/><rect x="774.1" y="2170.4" width="5" height="71.2" fill="#c3c3c5"/><rect x="781.0" y="2170.4" width="5" height="71.2" fill="#c3c3c5"/><rect x="787.9" y="2170.4" width="5" height="71.2" fill="#c3c3c5"/><rect x="794.8" y="2170.4" width="5" height="71.2" fill="#c3c3c5"/><rect x="801.7" y="2170.4" width="5" height="71.2" fill="#c3c3c5"/><rect x="809.9" y="2170.4" width="2.4" height="71.2" fill="#7b7b7d"/><rect x="815.5" y="2170.4" width="5" height="71.2" fill="#c3c3c5"/><rect x="822.4" y="2170.4" width="5" height="71.2" fill="#c3c3c5"/><rect x="829.3" y="2170.4" width="5" height="71.2" fill="#c3c3c5"/><rect x="836.2" y="2170.4" width="5" height="71.2" fill="#c3c3c5"/><rect x="844.4" y="2185.0" width="2.4" height="42.0" fill="#7b7b7d"/><rect x="851.3" y="2170.4" width="2.4" height="71.2" fill="#7b7b7d"/><rect x="858.2" y="2170.4" width="2.4" height="71.2" fill="#7b7b7d"/><rect x="863.8" y="2170.4" width="5" height="71.2" fill="#c3c3c5"/><rect x="872.0" y="2170.4" width="2.4" height="71.2" fill="#7b7b7d"/><rect x="878.9" y="2170.4" width="2.4" height="71.2" fill="#7b7b7d"/><rect x="885.8" y="2170.4" width="2.4" height="71.2" fill="#7b7b7d"/><rect x="892.7" y="2170.4" width="2.4" height="71.2" fill="#7b7b7d"/><rect x="899.6" y="2170.4" width="2.4" height="71.2" fill="#7b7b7d"/><rect x="906.5" y="2170.4" width="2.4" height="71.2" fill="#7b7b7d"/><rect x="913.4" y="2170.4" width="2.4" height="71.2" fill="#7b7b7d"/><rect x="920.3" y="2170.4" width="2.4" height="71.2" fill="#7b7b7d"/><rect x="927.2" y="2170.4" width="2.4" height="71.2" fill="#7b7b7d"/><rect x="934.1" y="2170.4" width="2.4" height="71.2" fill="#7b7b7d"/><rect x="941.0" y="2170.4" width="2.4" height="71.2" fill="#7b7b7d"/><rect x="946.6" y="2170.4" width="5" height="71.2" fill="#c3c3c5"/><rect x="953.5" y="2170.4" width="5" height="71.2" fill="#c3c3c5"/><rect x="961.7" y="2170.4" width="2.4" height="71.2" fill="#7b7b7d"/><rect x="968.6" y="2170.4" width="2.4" height="71.2" fill="#7b7b7d"/><rect x="975.5" y="2170.4" width="2.4" height="71.2" fill="#7b7b7d"/><rect x="982.4" y="2170.4" width="2.4" height="71.2" fill="#7b7b7d"/><rect x="989.3" y="2170.4" width="2.4" height="71.2" fill="#7b7b7d"/><rect x="994.9" y="2170.4" width="5" height="71.2" fill="#c3c3c5"/><rect x="1001.8" y="2170.4" width="5" height="71.2" fill="#c3c3c5"/><rect x="1010.0" y="2170.4" width="2.4" height="71.2" fill="#7b7b7d"/><rect x="1016.9" y="2170.4" width="2.4" height="71.2" fill="#7b7b7d"/><rect x="1023.8" y="2170.4" width="2.4" height="71.2" fill="#7b7b7d"/><rect x="1030.7" y="2170.4" width="2.4" height="71.2" fill="#7b7b7d"/><rect x="1037.6" y="2170.4" width="2.4" height="71.2" fill="#7b7b7d"/><rect x="1044.5" y="2170.4" width="2.4" height="71.2" fill="#7b7b7d"/><rect x="1050.1" y="2170.4" width="5" height="71.2" fill="#c3c3c5"/><rect x="1058.3" y="2170.4" width="2.4" height="71.2" fill="#7b7b7d"/><rect x="1065.2" y="2170.4" width="2.4" height="71.2" fill="#7b7b7d"/><rect x="1070.8" y="2170.4" width="5" height="71.2" fill="#c3c3c5"/><rect x="1077.7" y="2170.4" width="5" height="71.2" fill="#c3c3c5"/><rect x="1085.9" y="2170.4" width="2.4" height="71.2" fill="#7b7b7d"/><rect x="1091.5" y="2170.4" width="5" height="71.2" fill="#c3c3c5"/><rect x="1099.7" y="2170.4" width="2.4" height="71.2" fill="#7b7b7d"/><rect x="1105.3" y="2170.4" width="5" height="71.2" fill="#c3c3c5"/><rect x="1112.2" y="2170.4" width="5" height="71.2" fill="#c3c3c5"/><rect x="1119.1" y="2170.4" width="5" height="71.2" fill="#c3c3c5"/><rect x="1125.8" y="2175.0" width="2.4" height="62.0" fill="#7b7b7d"/><rect x="1131.8" y="2175.0" width="2.4" height="62.0" fill="#7b7b7d"/><rect x="1138.5" y="2194.0" width="5" height="24.0" fill="#c3c3c5"/><rect x="1145.8" y="2193.0" width="2.4" height="26.0" fill="#7b7b7d"/><rect x="1152.3" y="2196.0" width="2.4" height="20.0" fill="#7b7b7d"/><rect x="1159.0" y="2203.5" width="3.5" height="5" fill="#9a9a9c"/><rect x="1165.2" y="2203.5" width="3.5" height="5" fill="#9a9a9c"/><rect x="1171.4" y="2203.5" width="3.5" height="5" fill="#9a9a9c"/><rect x="1177.6" y="2203.5" width="3.5" height="5" fill="#9a9a9c"/><rect x="1183.8" y="2203.5" width="3.5" height="5" fill="#9a9a9c"/><rect x="1190.0" y="2203.5" width="3.5" height="5" fill="#9a9a9c"/></svg>
<div class="a" style="left:463px;top:2132px;width:19px;height:149px;border-radius:9px;background:#d5e6ff;opacity:0.9;"></div>
<div class="a" style="left:466px;top:2135px;width:13px;height:143px;border-radius:6.5px;background:#386ed8;"></div>
<div class="t" style="left:21.5px;top:2296.5px;font-size:36.0px;line-height:36.0px;letter-spacing:0.00px;color:#d0d0d3;transform:scaleX(1.0918);transform-origin:0 0;">0:00</div>
<div class="t" style="left:1124.5px;top:2296.5px;font-size:36.0px;line-height:36.0px;letter-spacing:0.00px;color:#d0d0d3;transform:scaleX(1.0775);transform-origin:0 0;">3:23</div>
<div class="t" style="left:400.0px;top:2407.4px;font-size:93.5px;line-height:93.5px;letter-spacing:1.68px;color:#232325;font-weight:700;transform:scaleX(1.1000);transform-origin:0 0;">01:18.00</div>
<div class="a" style="left:579.5px;top:2693px;width:24.3px;height:79.4px;border-radius:4px;background:#1c1c1e;"></div>
<div class="a" style="left:615.5px;top:2693px;width:24.3px;height:79.4px;border-radius:4px;background:#1c1c1e;"></div>
<svg style="left:391.2px;top:2696.0px" width="80" height="80" viewBox="-40 -40 80 80"><g transform="scale(-1,1)" fill="none" stroke="#1c1c1e" stroke-width="4" stroke-linecap="round"><path d="M-2,-25.5 A25.5,25.5 0 1 0 20.5,-15.2"/></g><g transform="scale(-1,1)"><path d="M-3,-33 L7,-25.7 L-3,-18.5Z" fill="#1c1c1e" stroke="#1c1c1e" stroke-width="2" stroke-linejoin="round"/></g><text x="0.5" y="10.5" text-anchor="middle" font-family="Liberation Sans, sans-serif" font-weight="700" font-size="27" fill="#3c3c3e" letter-spacing="-1.5">15</text></svg>
<svg style="left:744.8px;top:2696.0px" width="80" height="80" viewBox="-40 -40 80 80"><g fill="none" stroke="#1c1c1e" stroke-width="4" stroke-linecap="round"><path d="M-2,-25.5 A25.5,25.5 0 1 0 20.5,-15.2"/></g><g><path d="M-3,-33 L7,-25.7 L-3,-18.5Z" fill="#1c1c1e" stroke="#1c1c1e" stroke-width="2" stroke-linejoin="round"/></g><text x="0.5" y="10.5" text-anchor="middle" font-family="Liberation Sans, sans-serif" font-weight="700" font-size="27" fill="#3c3c3e" letter-spacing="-1.5">15</text></svg>
<!-- sec_dock -->
<div class="a" style="left:28px;top:2981px;width:3100px;height:60px;border-radius:30px 0 0 0;background:#e2e7f2;box-shadow:0 -1.5px 0 0 #b9bfc9;"></div>
<div class="a" style="left:744px;top:2994px;width:32px;height:20px;border-radius:12px;background:#c4504a;filter:blur(1.5px);"></div>
<div class="a" style="left:2096px;top:2994px;width:32px;height:20px;border-radius:12px;background:#c4504a;filter:blur(1.5px);"></div>
</body></html>
